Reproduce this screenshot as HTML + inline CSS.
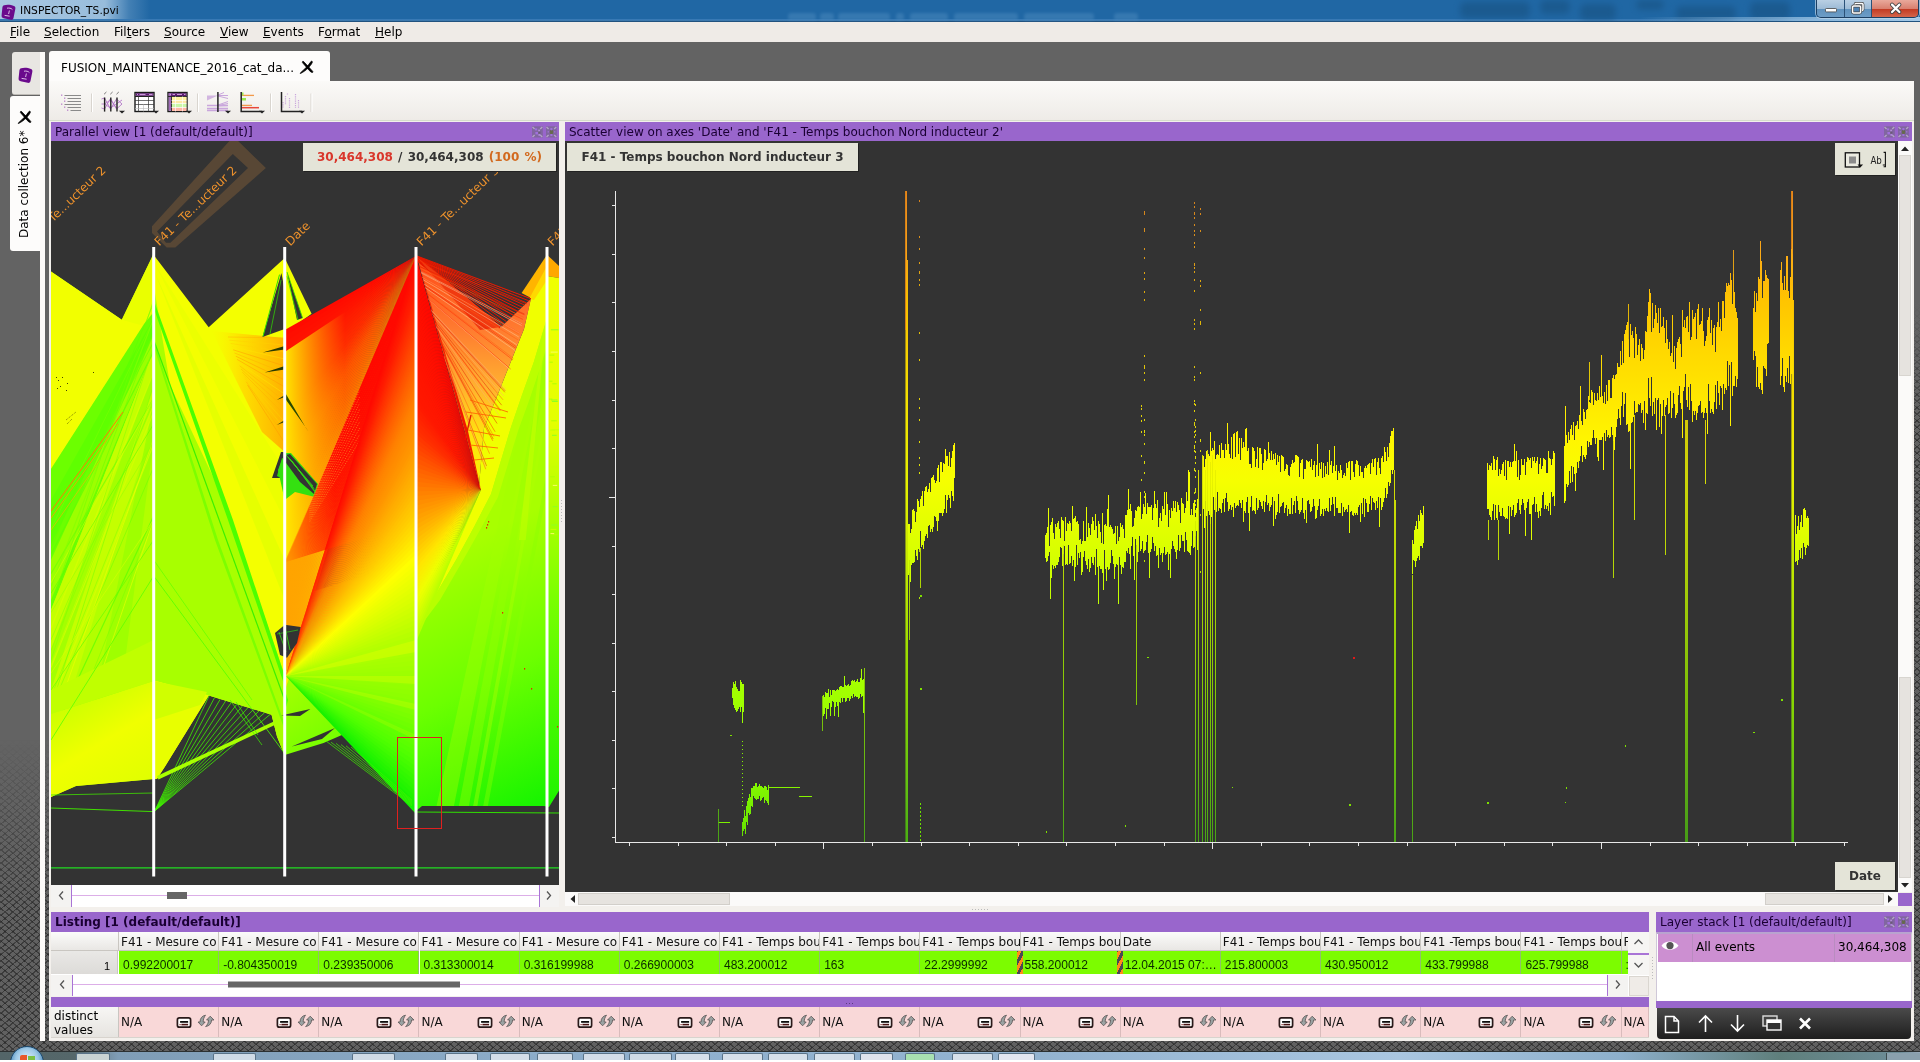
<!DOCTYPE html>
<html><head><meta charset="utf-8"><title>INSPECTOR_TS.pvi</title>
<style>

*{box-sizing:border-box;margin:0;padding:0}
html,body{width:1920px;height:1062px;overflow:hidden}
body{will-change:transform;background:#636363;font-family:"DejaVu Sans","Liberation Sans",sans-serif;font-size:12px;color:#000;position:relative}
.abs{position:absolute}
svg{position:absolute;overflow:visible}
#titlebar{left:0;top:0;width:1920px;height:22px;background:#2067a4}
#titleglow{left:0;top:0;width:150px;height:21px;background:linear-gradient(90deg,rgba(205,225,242,.8) 0,rgba(185,212,235,.78) 70%,rgba(120,165,205,.4) 86%,rgba(32,103,164,0) 100%)}
#titletext{left:20px;top:4px;font-size:10.67px;line-height:14px;color:#000;white-space:pre}
#titleline{left:0;top:18.5px;width:1920px;height:3.5px;background:linear-gradient(#2a6dab 0,#4a8ac2 40%,#1b4c78 75%,#2d5f8d 100%)}
#menubar{left:0;top:22px;width:1920px;height:20px;background:#efebe7}
.mi{position:absolute;top:3px;font-size:12px;line-height:14px;white-space:pre}
.mi u{text-decoration:underline;text-underline-offset:1px}
#win{left:49px;top:81px;width:1865px;height:960px;background:#f3f0ec}
#maintab{left:49px;top:51px;width:281px;height:31px;background:#fdfcfb;border-radius:3px 3px 0 0}
#toolbar{left:49px;top:81px;width:1865px;height:40px;background:linear-gradient(#fbfaf8,#eeebe7);border-bottom:1px solid #d5dccb}
.phead{position:absolute;height:19px;background:#9966cc;color:#1a0033;font-size:12px;line-height:20px;padding-left:4px;white-space:pre;overflow:hidden}
.dark{position:absolute;background:#333}
.lbl{position:absolute;background:#e4e4d8;font-weight:bold;font-size:12px;color:#333;white-space:pre;text-align:center;box-shadow:1px 1px 0 #222}
.hatch{position:absolute;background:
 repeating-linear-gradient(40deg,rgba(30,30,30,.55) 0,rgba(30,30,30,.55) 1px,transparent 1.2px,transparent 5px),
 repeating-linear-gradient(-40deg,rgba(30,30,30,.55) 0,rgba(30,30,30,.55) 1px,transparent 1.2px,transparent 5px),#616161}
.hc{position:absolute;top:932px;height:19px;width:100px;background:linear-gradient(#fbfbfa,#e9e7e4);border-right:1px solid #c9c6c1;border-bottom:1px solid #c9c6c1;font-size:12px;line-height:20px;padding-left:2px;white-space:pre;overflow:hidden;color:#111}
.dc{position:absolute;top:951px;height:23px;width:100px;background:#7cfc00;border-right:1px solid #8fbf6a;font-family:"Liberation Sans",sans-serif;font-size:12px;line-height:29px;padding-left:4px;white-space:pre;overflow:hidden;color:#0a2a00}
.nc{position:absolute;top:1007px;height:30px;width:100px;background:#f9d8d8;border-right:1px solid #d9bcbc;font-size:12px;line-height:31px;padding-left:2px;white-space:pre;overflow:hidden;color:#111}

</style></head>
<body>
<div class="hatch" style="left:0;top:1041px;width:1920px;height:11px"></div>
<div class="hatch" style="left:1914px;top:300px;width:6px;height:752px;-webkit-mask-image:linear-gradient(180deg,transparent 0,#000 120px);mask-image:linear-gradient(180deg,transparent 0,#000 120px)"></div>
<div class="hatch" style="left:0;top:740px;width:49px;height:312px;-webkit-mask-image:linear-gradient(180deg,transparent 0,#000 55%);mask-image:linear-gradient(180deg,transparent 0,#000 55%)"></div>
<div id="titlebar" class="abs"></div><div id="titleglow" class="abs"></div><div id="titleline" class="abs"></div>
<svg style="left:0px;top:4px" width="17" height="17" viewBox="0 0 15 17"><path d="M3.2 1.2 C6 0.2 10 0.6 13 2 C14.4 2.8 14.6 3.6 14.3 5 L12.6 13.6 C12.3 15.4 11.4 16.2 9.6 15.8 L2.6 14.2 C1 13.8 0.4 12.8 0.6 11.2 L1.4 3.4 C1.5 2.2 2.1 1.6 3.2 1.2 Z" fill="#6a0a8c"/><path d="M6 4.2 C8 3.8 10.4 4.2 11.4 5.6 M8.4 6.5 L7.6 10 M3.6 11.4 L8.6 12.2" stroke="#e8d0f0" stroke-width="0.9" fill="none"/></svg>
<div id="titletext" class="abs">INSPECTOR_TS.pvi</div>
<div class="abs" style="left:788px;top:11px;width:350px;height:9px;overflow:hidden;filter:blur(1.4px);opacity:.5"><div class="abs" style="left:0px;top:2px;width:28px;height:8px;background:#4c8abd;border-radius:3px"></div><div class="abs" style="left:32px;top:2px;width:14px;height:8px;background:#4c8abd;border-radius:3px"></div><div class="abs" style="left:50px;top:2px;width:52px;height:8px;background:#4c8abd;border-radius:3px"></div><div class="abs" style="left:108px;top:2px;width:8px;height:8px;background:#4c8abd;border-radius:3px"></div><div class="abs" style="left:122px;top:2px;width:38px;height:8px;background:#4c8abd;border-radius:3px"></div><div class="abs" style="left:166px;top:2px;width:64px;height:8px;background:#4c8abd;border-radius:3px"></div><div class="abs" style="left:236px;top:2px;width:70px;height:8px;background:#4c8abd;border-radius:3px"></div><div class="abs" style="left:326px;top:2px;width:24px;height:8px;background:#4c8abd;border-radius:3px"></div></div>
<div class="abs" style="left:1440px;top:0;width:380px;height:20px;overflow:hidden;filter:blur(3px);opacity:.55"><div class="abs" style="left:20px;top:2px;width:70px;height:16px;background:#17507f;border-radius:6px"></div><div class="abs" style="left:100px;top:0px;width:30px;height:14px;background:#17507f;border-radius:6px"></div><div class="abs" style="left:140px;top:4px;width:36px;height:16px;background:#17507f;border-radius:6px"></div><div class="abs" style="left:196px;top:0px;width:28px;height:10px;background:#17507f;border-radius:6px"></div><div class="abs" style="left:236px;top:6px;width:60px;height:14px;background:#17507f;border-radius:6px"></div><div class="abs" style="left:310px;top:2px;width:40px;height:18px;background:#17507f;border-radius:6px"></div></div>
<div class="abs" style="left:1640px;top:17px;width:280px;height:3.5px;background:linear-gradient(90deg,rgba(160,200,232,0),rgba(160,200,232,.75) 60%,rgba(175,210,238,.9))"></div>
<div class="abs" style="left:1816px;top:0;width:103px;height:18px;border-radius:0 0 5px 5px;border:1px solid #1c3f63;border-top:0;box-shadow:0 0 0 1px rgba(190,215,235,.7);overflow:hidden"><div class="abs" style="left:0;top:0;width:28px;height:18px;background:linear-gradient(#b9cfe3 0,#9dbbd6 48%,#5f91bd 50%,#6f9fc8 100%);border-right:1px solid #2b5177"></div><div class="abs" style="left:28px;top:0;width:27px;height:18px;background:linear-gradient(#b9cfe3 0,#9dbbd6 48%,#5f91bd 50%,#6f9fc8 100%);border-right:1px solid #2b5177"></div><div class="abs" style="left:55px;top:0;width:48px;height:18px;background:linear-gradient(#e9a99b 0,#d9806f 48%,#c23a22 50%,#d66a50 100%)"></div></div>
<svg style="left:1816px;top:0" width="103" height="18" viewBox="0 0 103 18"><rect x="9.5" y="8.5" width="11" height="3.4" rx="0.8" fill="#fff" stroke="#444" stroke-width=".8"/><rect x="39" y="3.4" width="8" height="7" rx="1" fill="none" stroke="#444" stroke-width="2.8"/><rect x="39" y="3.4" width="8" height="7" rx="1" fill="none" stroke="#fff" stroke-width="1.5"/><rect x="36.6" y="6" width="8" height="7" rx="1" fill="#4f83b4" stroke="#444" stroke-width="2.8"/><rect x="36.6" y="6" width="8" height="7" rx="1" fill="none" stroke="#fff" stroke-width="1.5"/><path d="M76 4.6 L83.4 12 M83.4 4.6 L76 12" stroke="#444" stroke-width="4" stroke-linecap="round"/><path d="M76 4.6 L83.4 12 M83.4 4.6 L76 12" stroke="#fff" stroke-width="2.2" stroke-linecap="round"/></svg>
<div id="menubar" class="abs">
<span class="mi" style="left:10px"><u>F</u>ile</span>
<span class="mi" style="left:44px"><u>S</u>election</span>
<span class="mi" style="left:114px">Fil<u>t</u>ers</span>
<span class="mi" style="left:164px"><u>S</u>ource</span>
<span class="mi" style="left:220px"><u>V</u>iew</span>
<span class="mi" style="left:263px"><u>E</u>vents</span>
<span class="mi" style="left:318px">F<u>o</u>rmat</span>
<span class="mi" style="left:375px"><u>H</u>elp</span>
</div>
<div class="abs" style="left:39.5px;top:51.5px;width:5px;height:989.5px;background:#fcfaf8"></div>
<div class="abs" style="left:11.5px;top:51.5px;width:28.5px;height:43.5px;background:#e8e6e2;border-radius:3px 0 0 3px;border-bottom:1px solid #bdbab5"></div>
<svg style="left:18px;top:67px" width="15" height="17" viewBox="0 0 15 17"><path d="M3.2 1.2 C6 0.2 10 0.6 13 2 C14.4 2.8 14.6 3.6 14.3 5 L12.6 13.6 C12.3 15.4 11.4 16.2 9.6 15.8 L2.6 14.2 C1 13.8 0.4 12.8 0.6 11.2 L1.4 3.4 C1.5 2.2 2.1 1.6 3.2 1.2 Z" fill="#6a0a8c"/><path d="M6 4.2 C8 3.8 10.4 4.2 11.4 5.6 M8.4 6.5 L7.6 10 M3.6 11.4 L8.6 12.2" stroke="#e8d0f0" stroke-width="0.9" fill="none"/></svg>
<div class="abs" style="left:9.5px;top:96px;width:30.5px;height:155px;background:#fdfcfb;border-radius:3px 0 0 3px"></div>
<svg style="left:18px;top:111px" width="14" height="13" viewBox="0 0 14 13"><path d="M2.6 0.4 C3.4 0.2 4 0.8 4.6 1.6 L12.6 10.2 C13.2 11 12.8 11.8 11.8 11.4 C10.8 11 10 10.2 9.2 9.4 L2.4 1.6 Z" fill="#000" stroke="#000" stroke-width=".7" stroke-linejoin="round"/><path d="M11.2 0.3 C12.2 -0.2 12.6 0.8 12.2 1.6 C10.4 5.2 6.4 9.6 0.6 12.4 C0.2 12.5 0 12.2 0.4 11.9 C4.4 8.6 8 4.6 11.2 0.3 Z" fill="#000" stroke="#000" stroke-width=".8" stroke-linejoin="round"/></svg>
<div class="abs" style="left:17px;top:238px;width:110px;height:15px;line-height:15px;font-size:12px;white-space:pre;transform-origin:0 0;transform:rotate(-90deg)">Data collection 6*</div>
<div id="maintab" class="abs"></div>
<div id="win" class="abs"></div>
<div id="toolbar" class="abs"></div>
<div class="abs" style="left:61px;top:61px;font-size:12px;line-height:15px;white-space:pre">FUSION_MAINTENANCE_2016_cat_da...</div>
<svg style="left:300px;top:60.5px" width="14" height="13" viewBox="0 0 14 13"><path d="M2.6 0.4 C3.4 0.2 4 0.8 4.6 1.6 L12.6 10.2 C13.2 11 12.8 11.8 11.8 11.4 C10.8 11 10 10.2 9.2 9.4 L2.4 1.6 Z" fill="#000" stroke="#000" stroke-width=".7" stroke-linejoin="round"/><path d="M11.2 0.3 C12.2 -0.2 12.6 0.8 12.2 1.6 C10.4 5.2 6.4 9.6 0.6 12.4 C0.2 12.5 0 12.2 0.4 11.9 C4.4 8.6 8 4.6 11.2 0.3 Z" fill="#000" stroke="#000" stroke-width=".8" stroke-linejoin="round"/></svg>
<svg style="left:49px;top:81px" width="300" height="40" viewBox="49 81 300 40"><path d="M91.5 93.5V112" stroke="#d9d5cf" stroke-width="1"/><path d="M92.5 93.5V112" stroke="#fff" stroke-width="1"/><path d="M197.5 93.5V112" stroke="#d9d5cf" stroke-width="1"/><path d="M198.5 93.5V112" stroke="#fff" stroke-width="1"/><path d="M270.5 93.5V112" stroke="#d9d5cf" stroke-width="1"/><path d="M271.5 93.5V112" stroke="#fff" stroke-width="1"/><path d="M311 93.5V112" stroke="#d9d5cf" stroke-width="1"/><path d="M312 93.5V112" stroke="#fff" stroke-width="1"/><path d="M64.5 95.5H81" stroke="#8a8a8a" stroke-width="1"/><rect x="61.1" y="94.6" width="1.2" height="1.1" fill="#a860c0"/><path d="M67.5 98.5H81" stroke="#8a8a8a" stroke-width="1"/><rect x="64.1" y="97.6" width="1.2" height="1.1" fill="#a860c0"/><path d="M67.5 101.5H81" stroke="#8a8a8a" stroke-width="1"/><rect x="64.1" y="100.6" width="1.2" height="1.1" fill="#a860c0"/><path d="M64.5 104.5H81" stroke="#8a8a8a" stroke-width="1"/><rect x="61.1" y="103.6" width="1.2" height="1.1" fill="#a860c0"/><path d="M67.5 107.5H81" stroke="#8a8a8a" stroke-width="1"/><rect x="64.1" y="106.6" width="1.2" height="1.1" fill="#a860c0"/><path d="M70.5 110.5H81" stroke="#8a8a8a" stroke-width="1"/><rect x="67.1" y="109.6" width="1.2" height="1.1" fill="#a860c0"/><path d="M101.5 99 L104.5 98 L110.5 109 L116.5 99 L122 104 L116.5 109 L110.5 98.5 L104.5 109 L101.5 108 M101.5 104 L104.5 104 L110.5 108 L116.5 104 L122 100 M104.5 104 L110.5 100 L116.5 108" stroke="#b070c8" stroke-width="1" fill="none" opacity=".85"/><path d="M104.6 97.5V111.6" stroke="#222" stroke-width="1.4"/><path d="M104.1 94.2 L106.39999999999999 92" stroke="#555" stroke-width="0.8"/><path d="M110.8 97.5V111.6" stroke="#222" stroke-width="1.4"/><path d="M110.3 94.2 L112.6 92" stroke="#555" stroke-width="0.8"/><path d="M117 97.5V111.6" stroke="#222" stroke-width="1.4"/><path d="M116.5 94.2 L118.8 92" stroke="#555" stroke-width="0.8"/><path d="M119 110.8h6l-3 2.6z" fill="#222"/><rect x="135" y="92.5" width="19" height="19" fill="#fff" stroke="#1a1a1a" stroke-width="1.4"/><rect x="135.7" y="93.2" width="17.6" height="2.6" fill="#5a1a6e"/><path d="M137 94.5h1 M139.5 94.5h6 M149 94.5h3.5" stroke="#c89ad8" stroke-width="1"/><path d="M135 96.5h19" stroke="#222" stroke-width="1" fill="none"/><path d="M135 100.5h19 M135 104.5h19 M138.5 96v15.5 M148.5 96v15.5" stroke="#333" stroke-width="0.7" fill="none"/><path d="M135 108.5h19 M143.5 104.5v7" stroke="#bbb" stroke-width="0.6" fill="none"/><path d="M153 110.8h6l-3 2.6z" fill="#222"/><rect x="168" y="92.5" width="19" height="19" fill="#fff" stroke="#1a1a1a" stroke-width="1.4"/><rect x="171.5" y="96.5" width="15" height="4" fill="#fff3a0"/><rect x="171.5" y="100.5" width="15" height="3" fill="#ffe9a8"/><rect x="171.5" y="103.5" width="15" height="4" fill="#c9f7a8"/><rect x="171.5" y="107.5" width="15" height="3.5" fill="#ffb9a8"/><rect x="168.7" y="93.2" width="17.6" height="2.8" fill="#5a1a6e"/><rect x="168.7" y="93.2" width="2.4" height="17.6" fill="#a06ab8"/><path d="M170 94.5h1 M172.5 94.5h2.5 M177 94.5h5 M184 94.5h1.5" stroke="#c89ad8" stroke-width="1"/><path d="M168 96.5h19 M171.5 96v15.5" stroke="#222" stroke-width="0.9" fill="none"/><path d="M175.5 96.5v15 M182.5 96.5v15 M171.5 100.5h15 M171.5 103.5h15 M171.5 107.5h15" stroke="#fff" stroke-width="0.8" opacity=".8" fill="none"/><path d="M186 110.8h6l-3 2.6z" fill="#222"/><path d="M207 95.5 L218 95.5 L207 100.5 Z" fill="#c9a6dc" opacity=".8"/><path d="M218 95 L224 92.5 M218 95.5 L228 95.5 M218 96 L228 98.5 M218 105 L228 101.5 M218 105.5 L228 103.5 M218 106 L228 105.5" stroke="#c9a6dc" stroke-width="1" fill="none"/><path d="M207 105.5H228 M207 108.5H228 M207 110.5H228" stroke="#c9a6dc" stroke-width="1.3" fill="none"/><path d="M217.9 92V112" stroke="#222" stroke-width="1.5"/><path d="M225 110.8h6l-3 2.6z" fill="#222"/><path d="M242 95.4H254" stroke="#f29a4a" stroke-width="1.3"/><path d="M242 98h4v2.5h-4z" fill="#9be84a"/><path d="M242 92.5h1.5v3h-1.5z" fill="#9be84a"/><path d="M242 105.4H252" stroke="#f29a4a" stroke-width="1.3"/><path d="M242 107.7H259" stroke="#e8463a" stroke-width="1.5"/><path d="M241.2 92V111.4H262" stroke="#222" stroke-width="1.5" fill="none"/><path d="M259 110.8h6l-3 2.6z" fill="#222"/><path d="M283 102v6 M285.5 96v9 M287.5 93.5v1 M289.5 98v10 M295.5 94v14 M298.5 100v8" stroke="#c9a6dc" stroke-width="1.2" stroke-dasharray="1.2 1" fill="none"/><path d="M281.5 92V111.4H302" stroke="#222" stroke-width="1.5" fill="none"/><path d="M299 110.8h6l-3 2.6z" fill="#222"/></svg>
<div class="phead" style="left:51px;top:122.3px;width:508px">Parallel view [1 (default/default)]</div>
<svg style="left:532px;top:126px" width="26" height="12" viewBox="0 0 26 12"><rect x="0" y="0.3" width="10.8" height="11.2" fill="#7f669c" opacity=".92"/><path d="M0.5 1 L2.6 3 M10.3 1 L8.2 3 M0.5 11 L2.6 9 M10.3 11 L8.2 9" stroke="#b4a6c6" stroke-width="1.3" fill="none"/><rect x="3" y="2.4" width="2.2" height="2" fill="#a070dc"/><rect x="3.4" y="6" width="2.6" height="2.4" fill="#a070dc"/><rect x="6.4" y="8" width="2" height="1.8" fill="#b088dc"/><rect x="6.2" y="3.6" width="1.8" height="1.8" fill="#b090d4"/><rect x="6.4" y="5.6" width="2" height="2" fill="#6a5a76"/><rect x="14" y="0.3" width="10.8" height="11.2" fill="#7f669c" opacity=".92"/><path d="M14.5 1 L16.6 3 M24.3 1 L22.2 3 M14.5 11 L16.6 9 M24.3 11 L22.2 9" stroke="#b4a6c6" stroke-width="1.3" fill="none"/><rect x="18.4" y="2" width="2" height="2" fill="#a070dc"/><rect x="18.4" y="8" width="2" height="2" fill="#a070dc"/><rect x="15.6" y="5" width="1.6" height="1.6" fill="#9a72c8"/><rect x="21.8" y="5" width="1.6" height="1.6" fill="#9a72c8"/><path d="M18 4.6 L21 7.4 M21 4.6 L18 7.4" stroke="#666a4c" stroke-width="1.6" fill="none"/></svg>
<div class="dark" style="left:51px;top:141px;width:508px;height:744px"></div>
<svg style="left:51px;top:141px;overflow:hidden" width="508" height="744" viewBox="51 141 508 744"><defs><linearGradient id="gB4" x1="211" y1="0" x2="285" y2="0" gradientUnits="userSpaceOnUse"><stop offset="0" stop-color="#fff000" stop-opacity="0"/><stop offset=".4" stop-color="#ffdc00" stop-opacity=".85"/><stop offset="1" stop-color="#ffb000"/></linearGradient><linearGradient id="gA4" x1="60" y1="700" x2="120" y2="800" gradientUnits="userSpaceOnUse"><stop offset="0" stop-color="#c8ff00"/><stop offset=".5" stop-color="#f0ff00"/><stop offset="1" stop-color="#e0ff00"/></linearGradient><linearGradient id="gD" x1="430" y1="560" x2="547" y2="800" gradientUnits="userSpaceOnUse"><stop offset="0" stop-color="#a8ff00"/><stop offset=".5" stop-color="#6cff00"/><stop offset="1" stop-color="#18f400"/></linearGradient><linearGradient id="gC" x1="300" y1="640" x2="416" y2="800" gradientUnits="userSpaceOnUse"><stop offset="0" stop-color="#b4ff00"/><stop offset=".5" stop-color="#78ff00"/><stop offset="1" stop-color="#18f400"/></linearGradient><linearGradient id="gO" x1="0" y1="258" x2="0" y2="490" gradientUnits="userSpaceOnUse"><stop offset="0" stop-color="#ff4a18"/><stop offset=".3" stop-color="#ff7a30"/><stop offset=".55" stop-color="#ffb030"/><stop offset=".75" stop-color="#ffe010"/><stop offset="1" stop-color="#f4f400"/></linearGradient><linearGradient id="gF1" x1="285" y1="0" x2="345" y2="0" gradientUnits="userSpaceOnUse"><stop offset="0" stop-color="#fff000" stop-opacity=".95"/><stop offset=".3" stop-color="#fff000" stop-opacity=".65"/><stop offset=".57" stop-color="#ffe800" stop-opacity=".4"/><stop offset="1" stop-color="#ffe000" stop-opacity="0"/></linearGradient><linearGradient id="gF2" x1="285" y1="0" x2="335" y2="0" gradientUnits="userSpaceOnUse"><stop offset="0" stop-color="#ffa000" stop-opacity=".95"/><stop offset=".5" stop-color="#ff8000" stop-opacity=".5"/><stop offset="1" stop-color="#ff6000" stop-opacity="0"/></linearGradient><linearGradient id="gR" x1="0" y1="276" x2="0" y2="800" gradientUnits="userSpaceOnUse"><stop offset="0" stop-color="#f0ff00"/><stop offset=".28" stop-color="#e4ff00"/><stop offset=".42" stop-color="#b8ff00"/><stop offset=".62" stop-color="#78ff00"/><stop offset="1" stop-color="#20f400"/></linearGradient></defs><polygon points="51.0,271.6 121.8,319.8 153.7,253.5 153.7,779.0 76.0,786.0 51.0,797.0" fill="#b2ff00" /><polygon points="51.0,271.6 121.8,319.8 146.0,322.0 51.0,469.0" fill="#f2ff00" /><polygon points="121.8,319.8 153.7,253.5 153.7,316.0 144.0,326.0" fill="#eaff00" /><polygon points="51.0,469.0 144.0,324.0 153.7,312.0 153.7,350.0 51.0,610.0" fill="#6cff00" /><polygon points="51.0,500.0 153.7,318.0 153.7,332.0 51.0,545.0" fill="#5cff00" opacity=".8"/><polygon points="51.0,560.0 153.7,335.0 153.7,350.0 51.0,600.0" fill="#9cff00" /><polygon points="51.0,610.0 153.7,350.0 153.7,420.0 51.0,760.0" fill="#c4ff00" /><polygon points="51.0,650.0 153.7,370.0 153.7,385.0 51.0,690.0" fill="#a4ff00" /><polygon points="95.0,700.0 153.7,400.0 153.7,440.0 120.0,700.0" fill="#9aff00" opacity=".8"/><clipPath id="cA"><polygon points="51,271.6 121.8,319.8 153.7,253.5 153.7,779 76,786 51,797"/></clipPath><g clip-path="url(#cA)"><path d="M51.0 650.3 L153.7 399.5" stroke="#86ff00" stroke-width="0.8" opacity=".7"/><path d="M51.0 667.5 L153.7 411.7" stroke="#d8ff00" stroke-width="1.2" opacity=".7"/><path d="M51.0 665.2 L153.7 404.7" stroke="#d8ff00" stroke-width="0.6" opacity=".7"/><path d="M51.0 573.8 L153.7 398.3" stroke="#70ff00" stroke-width="1.2" opacity=".7"/><path d="M51.0 696.8 L153.7 439.6" stroke="#86ff00" stroke-width="0.8" opacity=".7"/><path d="M51.0 704.7 L153.7 443.9" stroke="#d8ff00" stroke-width="1.2" opacity=".7"/><path d="M51.0 548.4 L153.7 303.3" stroke="#5cff00" stroke-width="0.6" opacity=".7"/><path d="M51.0 535.4 L153.7 341.8" stroke="#5cff00" stroke-width="0.8" opacity=".7"/><path d="M51.0 628.2 L153.7 371.8" stroke="#d8ff00" stroke-width="1.2" opacity=".7"/><path d="M51.0 554.3 L153.7 351.4" stroke="#5cff00" stroke-width="1.2" opacity=".7"/><path d="M51.0 586.6 L153.7 318.7" stroke="#86ff00" stroke-width="1.2" opacity=".7"/><path d="M51.0 820.3 L153.7 519.1" stroke="#f4ff00" stroke-width="0.8" opacity=".7"/><path d="M51.0 709.1 L153.7 466.8" stroke="#5cff00" stroke-width="0.6" opacity=".7"/><path d="M51.0 593.3 L153.7 423.9" stroke="#5cff00" stroke-width="0.8" opacity=".7"/><path d="M51.0 707.5 L153.7 385.0" stroke="#5cff00" stroke-width="0.6" opacity=".7"/><path d="M51.0 660.0 L153.7 346.1" stroke="#86ff00" stroke-width="0.8" opacity=".7"/><path d="M51.0 737.2 L153.7 515.7" stroke="#5cff00" stroke-width="1.2" opacity=".7"/><path d="M51.0 728.6 L153.7 438.5" stroke="#f4ff00" stroke-width="0.8" opacity=".7"/><path d="M51.0 529.0 L153.7 319.2" stroke="#86ff00" stroke-width="0.6" opacity=".7"/><path d="M51.0 606.9 L153.7 329.6" stroke="#5cff00" stroke-width="0.6" opacity=".7"/><path d="M51.0 639.9 L153.7 402.3" stroke="#70ff00" stroke-width="0.6" opacity=".7"/><path d="M51.0 582.8 L153.7 398.4" stroke="#d8ff00" stroke-width="0.8" opacity=".7"/><path d="M51.0 612.6 L153.7 441.6" stroke="#86ff00" stroke-width="0.6" opacity=".7"/><path d="M51.0 605.7 L153.7 300.1" stroke="#70ff00" stroke-width="0.8" opacity=".7"/><path d="M51.0 673.1 L153.7 519.5" stroke="#d8ff00" stroke-width="0.8" opacity=".7"/><path d="M51.0 777.4 L153.7 519.1" stroke="#70ff00" stroke-width="0.6" opacity=".7"/></g><path d="M51.0 511.0 L123.0 412.0" stroke="#ff7a00" stroke-width="1" /><path d="M51.0 518.0 L118.0 424.0" stroke="#ff9a00" stroke-width="0.8" /><path d="M51.0 530.0 L100.0 460.0" stroke="#ffb000" stroke-width="0.6" /><polygon points="153.7,681.0 153.7,779.0 76.0,786.0 51.0,797.0 51.0,714.0" fill="url(#gA4)" /><polygon points="153.7,640.0 153.7,681.0 51.0,714.0 51.0,690.0" fill="#c0ff00" /><path d="M51.0 740.0 L153.7 576.0" stroke="#66ff00" stroke-width="0.9" /><path d="M51.0 690.0 L153.7 540.0" stroke="#66ff00" stroke-width="0.7" /><path d="M51.0 795.0 L153.7 793.0" stroke="#40e000" stroke-width="0.8" /><path d="M51.0 808.0 L153.7 811.6" stroke="#40e000" stroke-width="1" /><rect x="56.0" y="377.0" width="1" height="1" fill="#444400"/><rect x="58.0" y="380.0" width="1" height="1" fill="#444400"/><rect x="62.0" y="377.0" width="1" height="1" fill="#444400"/><rect x="60.0" y="386.0" width="1" height="1" fill="#444400"/><rect x="66.0" y="390.0" width="1" height="1" fill="#444400"/><rect x="93.0" y="372.0" width="1" height="1" fill="#444400"/><rect x="57.0" y="388.0" width="1" height="1" fill="#444400"/><rect x="67.0" y="383.0" width="1" height="1" fill="#444400"/><path d="M66.0 420.0 L76.0 412.0" stroke="#555500" stroke-width="0.7" stroke-dasharray="1 1"/><path d="M67.0 424.0 L72.0 419.0" stroke="#555500" stroke-width="0.7" stroke-dasharray="1 1"/><polygon points="153.7,255.0 208.7,327.3 284.7,258.0 284.7,755.6 277.0,736.5 271.5,714.7 208.8,695.6 165.0,766.5 157.0,778.8 153.7,779.0" fill="#f4ff00" /><polygon points="153.7,285.0 170.0,385.0 222.0,496.0 245.0,560.0 284.7,675.0 284.7,755.6 277.0,736.5 271.5,714.7 208.8,695.6 153.7,680.6" fill="#a8ff00" /><polygon points="153.7,262.0 284.7,470.0 284.7,520.0" fill="#ecff00" /><polygon points="153.7,270.0 284.7,560.0 284.7,600.0" fill="#e6ff00" /><polygon points="153.7,300.0 153.7,308.0 228.0,520.0 284.7,686.0 284.7,676.0 233.0,520.0" fill="#4cff00" /><polygon points="153.7,340.0 153.7,346.0 215.0,540.0 284.7,730.0 284.7,724.0 218.0,540.0" fill="#7cff00" /><path d="M153.7 340.0 L284.7 700.0" stroke="#3cf000" stroke-width="1.2" /><path d="M153.7 576.0 L284.7 753.6" stroke="#50ff00" stroke-width="0.8" /><path d="M153.7 560.0 L252.0 700.0" stroke="#50ff00" stroke-width="0.6" /><polygon points="153.7,680.6 208.8,695.6 165.0,766.5 157.0,778.8 153.7,779.0" fill="#e8ff00" /><polygon points="153.7,681.0 207.0,692.0 200.0,705.0 153.7,720.0" fill="#d0ff00" /><polygon points="211.7,331.0 284.7,338.0 284.7,452.0 262.0,432.0 238.0,384.0" fill="url(#gB4)" /><path d="M228.0 337.0 L284.7 338.0" stroke="#ffb000" stroke-width="0.7" opacity=".7"/><path d="M229.3 340.2 L284.7 345.0" stroke="#ffd000" stroke-width="0.7" opacity=".7"/><path d="M230.6 343.4 L284.7 352.0" stroke="#ffd000" stroke-width="0.7" opacity=".7"/><path d="M231.9 346.6 L284.7 359.0" stroke="#ffe400" stroke-width="0.7" opacity=".7"/><path d="M233.2 349.8 L284.7 366.0" stroke="#ff9a00" stroke-width="0.7" opacity=".7"/><path d="M234.5 353.0 L284.7 373.0" stroke="#ffb000" stroke-width="0.7" opacity=".7"/><path d="M235.8 356.2 L284.7 380.0" stroke="#ff9a00" stroke-width="0.7" opacity=".7"/><path d="M237.1 359.4 L284.7 387.0" stroke="#ff9a00" stroke-width="0.7" opacity=".7"/><path d="M238.4 362.6 L284.7 394.0" stroke="#ffe400" stroke-width="0.7" opacity=".7"/><path d="M239.7 365.8 L284.7 401.0" stroke="#ffb000" stroke-width="0.7" opacity=".7"/><path d="M241.0 369.0 L284.7 408.0" stroke="#ffb000" stroke-width="0.7" opacity=".7"/><path d="M242.3 372.2 L284.7 415.0" stroke="#ffb000" stroke-width="0.7" opacity=".7"/><path d="M243.6 375.4 L284.7 422.0" stroke="#ffd000" stroke-width="0.7" opacity=".7"/><path d="M244.9 378.6 L284.7 429.0" stroke="#ffd000" stroke-width="0.7" opacity=".7"/><path d="M246.2 381.8 L284.7 436.0" stroke="#ffb000" stroke-width="0.7" opacity=".7"/><path d="M247.5 385.0 L284.7 443.0" stroke="#ff9a00" stroke-width="0.7" opacity=".7"/><polygon points="281.4,273.0 262.5,337.0 284.7,329.0 284.7,290.0" fill="#333" /><path d="M279.5 274.6 L263.0 336.4" stroke="#30e000" stroke-width="1" /><path d="M281.0 280.0 L270.0 334.0" stroke="#30e000" stroke-width="0.7" /><polygon points="262.7,352.5 284.7,346.0 284.7,349.5" fill="#2a3a00" /><polygon points="264.7,372.5 284.7,366.0 284.7,369.5" fill="#2a3a00" /><polygon points="276.7,400.0 284.7,395.0 284.7,397.0" fill="#2a3a00" /><polygon points="276.7,425.0 284.7,420.0 284.7,422.0" fill="#2a3a00" /><polygon points="272.0,478.0 281.0,452.0 284.7,452.0 284.7,478.0" fill="#333" /><polygon points="277.0,476.0 282.0,458.0 284.7,458.0 284.7,480.0" fill="#30e000" /><path d="M154.7 811.0 L209.0 696.0" stroke="#40f000" stroke-width="0.8" /><path d="M154.7 811.0 L214.5 697.7" stroke="#40f000" stroke-width="0.8" /><path d="M154.7 811.0 L220.1 699.4" stroke="#40f000" stroke-width="0.8" /><path d="M154.7 811.0 L225.6 701.0" stroke="#40f000" stroke-width="0.8" /><path d="M154.7 811.0 L231.2 702.7" stroke="#40f000" stroke-width="0.8" /><path d="M154.7 811.0 L236.7 704.4" stroke="#40f000" stroke-width="0.8" /><path d="M154.7 811.0 L242.3 706.1" stroke="#40f000" stroke-width="0.8" /><path d="M154.7 811.0 L247.8 707.8" stroke="#40f000" stroke-width="0.8" /><path d="M154.7 811.0 L253.4 709.5" stroke="#40f000" stroke-width="0.8" /><path d="M154.7 811.0 L258.9 711.1" stroke="#40f000" stroke-width="0.8" /><path d="M154.7 811.0 L264.5 712.8" stroke="#40f000" stroke-width="0.8" /><path d="M154.7 811.0 L270.0 714.5" stroke="#40f000" stroke-width="0.8" /><polygon points="157.0,776.0 277.0,720.0 278.0,723.5 158.5,779.5" fill="#a8ff00" /><path d="M230.0 700.0 L262.0 745.0" stroke="#40f000" stroke-width="0.7" /><path d="M236.0 702.0 L258.0 735.0" stroke="#40f000" stroke-width="0.7" /><polygon points="284.7,258.0 311.6,313.8 300.0,322.0 288.0,331.0 284.7,331.0" fill="#f2ff00" /><polygon points="287.0,272.0 302.6,318.0 297.0,320.0" fill="#333" /><path d="M287.0 272.0 L302.6 318.0" stroke="#30e000" stroke-width="0.8" /><path d="M287.0 276.0 L298.0 320.0" stroke="#30e000" stroke-width="0.8" /><polygon points="284.7,600.0 416.0,560.0 416.0,812.0 412.4,805.5 346.5,733.0 323.5,743.0 284.7,755.0" fill="url(#gC)" /><polygon points="416.0,256.0 284.7,330.0 284.7,338.0" fill="#ff0b00" /><polygon points="416.0,256.0 284.7,336.0 284.7,344.0" fill="#ff0e00" /><polygon points="416.0,256.0 284.7,342.0 284.7,350.0" fill="#ff1000" /><polygon points="416.0,256.0 284.7,348.0 284.7,356.0" fill="#ff1200" /><polygon points="416.0,256.0 284.7,354.0 284.7,362.0" fill="#ff1400" /><polygon points="416.0,256.0 284.7,360.0 284.7,368.0" fill="#ff1700" /><polygon points="416.0,256.0 284.7,366.0 284.7,374.0" fill="#ff1900" /><polygon points="416.0,256.0 284.7,372.0 284.7,380.0" fill="#ff1c00" /><polygon points="416.0,256.0 284.7,378.0 284.7,386.0" fill="#ff1e00" /><polygon points="416.0,256.0 284.7,384.0 284.7,392.0" fill="#ff2000" /><polygon points="416.0,256.0 284.7,390.0 284.7,398.0" fill="#ff2200" /><polygon points="416.0,256.0 284.7,396.0 284.7,404.0" fill="#ff2500" /><polygon points="416.0,256.0 284.7,402.0 284.7,410.0" fill="#ff2700" /><polygon points="416.0,256.0 284.7,408.0 284.7,416.0" fill="#ff2a00" /><polygon points="416.0,256.0 284.7,414.0 284.7,422.0" fill="#ff2c00" /><polygon points="416.0,256.0 284.7,420.0 284.7,428.0" fill="#ff2f00" /><polygon points="416.0,256.0 284.7,426.0 284.7,434.0" fill="#ff3400" /><polygon points="416.0,256.0 284.7,432.0 284.7,440.0" fill="#ff3800" /><polygon points="416.0,256.0 284.7,438.0 284.7,446.0" fill="#ff3d00" /><polygon points="416.0,256.0 284.7,444.0 284.7,452.0" fill="#ff4100" /><polygon points="416.0,256.0 284.7,450.0 284.7,458.0" fill="#ff4600" /><polygon points="416.0,256.0 284.7,456.0 284.7,464.0" fill="#ff4a00" /><polygon points="416.0,256.0 284.7,462.0 284.7,470.0" fill="#ff4f00" /><polygon points="416.0,256.0 284.7,468.0 284.7,476.0" fill="#ff5300" /><polygon points="416.0,256.0 284.7,474.0 284.7,482.0" fill="#ff5700" /><polygon points="416.0,256.0 284.7,480.0 284.7,488.0" fill="#ff5900" /><polygon points="416.0,256.0 284.7,486.0 284.7,494.0" fill="#ff5b00" /><polygon points="416.0,256.0 284.7,492.0 284.7,500.0" fill="#ff5e00" /><polygon points="416.0,256.0 284.7,498.0 284.7,506.0" fill="#ff6000" /><polygon points="416.0,256.0 284.7,504.0 284.7,512.0" fill="#ff6200" /><polygon points="416.0,256.0 284.7,510.0 284.7,518.0" fill="#ff6500" /><polygon points="416.0,256.0 284.7,516.0 284.7,524.0" fill="#ff6700" /><polygon points="416.0,256.0 284.7,522.0 284.7,530.0" fill="#ff6900" /><polygon points="416.0,256.0 284.7,528.0 284.7,536.0" fill="#ff6c00" /><polygon points="416.0,256.0 284.7,534.0 284.7,542.0" fill="#ff6e00" /><polygon points="416.0,256.0 284.7,540.0 284.7,548.0" fill="#ff7200" /><polygon points="416.0,256.0 284.7,546.0 284.7,554.0" fill="#ff7600" /><polygon points="416.0,256.0 284.7,552.0 284.7,560.0" fill="#ff7900" /><polygon points="416.0,256.0 284.7,558.0 284.7,566.0" fill="#ff7d00" /><polygon points="416.0,256.0 284.7,564.0 284.7,572.0" fill="#ff8100" /><polygon points="416.0,256.0 284.7,570.0 284.7,578.0" fill="#ff8500" /><polygon points="416.0,256.0 284.7,576.0 284.7,584.0" fill="#ff8900" /><polygon points="416.0,256.0 284.7,582.0 284.7,590.0" fill="#ff8c00" /><polygon points="416.0,256.0 284.7,588.0 284.7,596.0" fill="#ff9000" /><polygon points="416.0,256.0 284.7,594.0 284.7,602.0" fill="#ff9400" /><polygon points="416.0,256.0 284.7,600.0 284.7,608.0" fill="#ff9800" /><polygon points="416.0,256.0 284.7,606.0 284.7,614.0" fill="#ff9b00" /><polygon points="416.0,256.0 284.7,612.0 284.7,620.0" fill="#ff9e00" /><polygon points="416.0,256.0 284.7,618.0 284.7,626.0" fill="#ffa200" /><polygon points="416.0,256.0 284.7,624.0 284.7,632.0" fill="#ffa500" /><polygon points="416.0,256.0 284.7,630.0 284.7,638.0" fill="#ffa800" /><polygon points="416.0,256.0 284.7,636.0 284.7,644.0" fill="#ffac00" /><polygon points="416.0,256.0 284.7,642.0 284.7,650.0" fill="#ffaf00" /><polygon points="416.0,256.0 284.7,648.0 284.7,656.0" fill="#ffb200" /><polygon points="416.0,256.0 284.7,654.0 284.7,662.0" fill="#ffb600" /><polygon points="416.0,256.0 284.7,660.0 284.7,668.0" fill="#ffb900" /><polygon points="416.0,256.0 284.7,666.0 284.7,674.0" fill="#ffbc00" /><polygon points="416.0,256.0 284.7,672.0 284.7,680.0" fill="#ffc000" /><polygon points="416.0,256.0 284.7,678.0 284.7,686.0" fill="#ffc300" /><polygon points="416.0,256.0 284.7,684.0 284.7,692.0" fill="#ffc600" /><polygon points="284.7,352.0 345.0,312.0 345.0,530.0 284.7,690.0" fill="url(#gF1)" /><polygon points="278.0,470.0 284.7,453.0 291.0,453.0 318.0,484.0 315.0,497.0 295.0,492.0 284.7,500.0" fill="#34e010" /><polygon points="281.0,456.0 290.0,454.0 317.0,484.0 314.0,494.0 300.0,482.0" fill="#333" /><path d="M286.0 455.0 L313.0 486.0" stroke="#34e010" stroke-width="0.8" /><path d="M288.0 457.0 L314.0 488.5" stroke="#34e010" stroke-width="0.8" /><path d="M290.0 459.0 L315.0 491.0" stroke="#34e010" stroke-width="0.8" /><path d="M292.0 461.0 L316.0 493.5" stroke="#34e010" stroke-width="0.8" /><polygon points="284.7,392.0 306.0,428.0 309.0,432.0 284.7,398.0" fill="#2a4a00" /><polygon points="285.7,562.0 416.0,256.0 416.0,264.6" fill="#ff0800" /><polygon points="285.7,562.0 416.0,262.6 416.0,271.2" fill="#ff0900" /><polygon points="285.7,562.0 416.0,269.2 416.0,277.8" fill="#ff0900" /><polygon points="285.7,562.0 416.0,275.8 416.0,284.4" fill="#ff0a00" /><polygon points="285.7,562.0 416.0,282.4 416.0,291.0" fill="#ff0a00" /><polygon points="285.7,562.0 416.0,289.0 416.0,297.6" fill="#ff0b00" /><polygon points="285.7,562.0 416.0,295.6 416.0,304.2" fill="#ff0b00" /><polygon points="285.7,562.0 416.0,302.2 416.0,310.8" fill="#ff0c00" /><polygon points="285.7,562.0 416.0,308.8 416.0,317.4" fill="#ff0d00" /><polygon points="285.7,562.0 416.0,315.4 416.0,324.0" fill="#ff0d00" /><polygon points="285.7,562.0 416.0,322.0 416.0,330.6" fill="#ff0e00" /><polygon points="285.7,562.0 416.0,328.6 416.0,337.2" fill="#ff0e00" /><polygon points="285.7,562.0 416.0,335.2 416.0,343.8" fill="#ff1000" /><polygon points="285.7,562.0 416.0,341.8 416.0,350.4" fill="#ff1100" /><polygon points="285.7,562.0 416.0,348.4 416.0,357.0" fill="#ff1200" /><polygon points="285.7,562.0 416.0,355.0 416.0,363.6" fill="#ff1300" /><polygon points="285.7,562.0 416.0,361.6 416.0,370.2" fill="#ff1400" /><polygon points="285.7,562.0 416.0,368.2 416.0,376.8" fill="#ff1500" /><polygon points="285.7,562.0 416.0,374.8 416.0,383.4" fill="#ff1700" /><polygon points="285.7,562.0 416.0,381.4 416.0,390.0" fill="#ff1800" /><polygon points="285.7,562.0 416.0,388.0 416.0,396.6" fill="#ff1900" /><polygon points="285.7,562.0 416.0,394.6 416.0,403.2" fill="#ff1a00" /><polygon points="285.7,562.0 416.0,401.2 416.0,409.8" fill="#ff1b00" /><polygon points="285.7,562.0 416.0,407.8 416.0,416.4" fill="#ff1c00" /><polygon points="285.7,562.0 416.0,414.4 416.0,423.0" fill="#ff1e00" /><polygon points="285.7,562.0 416.0,421.0 416.0,429.6" fill="#ff1f00" /><polygon points="285.7,562.0 416.0,427.6 416.0,436.2" fill="#ff2100" /><polygon points="285.7,562.0 416.0,434.2 416.0,442.8" fill="#ff2300" /><polygon points="285.7,562.0 416.0,440.8 416.0,449.4" fill="#ff2500" /><polygon points="285.7,562.0 416.0,447.4 416.0,456.0" fill="#ff2700" /><polygon points="285.7,562.0 416.0,454.0 416.0,462.6" fill="#ff2900" /><polygon points="285.7,562.0 416.0,460.6 416.0,469.2" fill="#ff2b00" /><polygon points="285.7,562.0 416.0,467.2 416.0,475.8" fill="#ff2d00" /><polygon points="285.7,562.0 416.0,473.8 416.0,482.4" fill="#ff2f00" /><polygon points="285.7,562.0 416.0,480.4 416.0,489.0" fill="#ff3100" /><polygon points="285.7,562.0 416.0,487.0 416.0,495.6" fill="#ff3300" /><polygon points="285.7,562.0 416.0,493.6 416.0,502.2" fill="#ff3500" /><polygon points="285.7,562.0 416.0,500.2 416.0,508.8" fill="#ff3700" /><polygon points="285.7,562.0 416.0,506.8 416.0,515.4" fill="#ff3900" /><polygon points="285.7,562.0 416.0,513.4 416.0,522.0" fill="#ff3b00" /><path d="M309.7 504.7 L359.7 390.2" stroke="#ffd640" stroke-width="0.6" stroke-dasharray="1 1.6" opacity=".8"/><path d="M309.7 506.8 L359.7 396.5" stroke="#ffd640" stroke-width="0.6" stroke-dasharray="1 1.6" opacity=".8"/><path d="M309.7 508.9 L359.7 402.8" stroke="#ffd640" stroke-width="0.6" stroke-dasharray="1 1.6" opacity=".8"/><path d="M309.7 511.0 L359.7 409.1" stroke="#ffd640" stroke-width="0.6" stroke-dasharray="1 1.6" opacity=".8"/><path d="M309.7 513.1 L359.7 415.4" stroke="#ffd640" stroke-width="0.6" stroke-dasharray="1 1.6" opacity=".8"/><path d="M309.7 515.2 L359.7 421.7" stroke="#ffd640" stroke-width="0.6" stroke-dasharray="1 1.6" opacity=".8"/><path d="M309.7 517.3 L359.7 428.0" stroke="#ffd640" stroke-width="0.6" stroke-dasharray="1 1.6" opacity=".8"/><path d="M309.7 519.4 L359.7 434.3" stroke="#ffd640" stroke-width="0.6" stroke-dasharray="1 1.6" opacity=".8"/><path d="M309.7 521.5 L359.7 440.6" stroke="#ffd640" stroke-width="0.6" stroke-dasharray="1 1.6" opacity=".8"/><polygon points="284.7,562.0 335.0,445.0 335.0,560.0 284.7,676.0" fill="url(#gF2)" /><polygon points="285.7,676.0 416.0,256.0 416.0,263.1" fill="#ff0a00" /><polygon points="285.7,676.0 416.0,261.1 416.0,268.1" fill="#ff0d00" /><polygon points="285.7,676.0 416.0,266.1 416.0,273.2" fill="#ff1000" /><polygon points="285.7,676.0 416.0,271.2 416.0,278.2" fill="#ff1300" /><polygon points="285.7,676.0 416.0,276.2 416.0,283.3" fill="#ff1700" /><polygon points="285.7,676.0 416.0,281.3 416.0,288.3" fill="#ff1a00" /><polygon points="285.7,676.0 416.0,286.3 416.0,293.4" fill="#ff1d00" /><polygon points="285.7,676.0 416.0,291.4 416.0,298.4" fill="#ff2100" /><polygon points="285.7,676.0 416.0,296.4 416.0,303.5" fill="#ff2600" /><polygon points="285.7,676.0 416.0,301.5 416.0,308.5" fill="#ff2a00" /><polygon points="285.7,676.0 416.0,306.5 416.0,313.6" fill="#ff2f00" /><polygon points="285.7,676.0 416.0,311.6 416.0,318.7" fill="#ff3300" /><polygon points="285.7,676.0 416.0,316.7 416.0,323.7" fill="#ff3800" /><polygon points="285.7,676.0 416.0,321.7 416.0,328.8" fill="#ff3c00" /><polygon points="285.7,676.0 416.0,326.8 416.0,333.8" fill="#ff4100" /><polygon points="285.7,676.0 416.0,331.8 416.0,338.9" fill="#ff4600" /><polygon points="285.7,676.0 416.0,336.9 416.0,343.9" fill="#ff4a00" /><polygon points="285.7,676.0 416.0,341.9 416.0,349.0" fill="#ff4f00" /><polygon points="285.7,676.0 416.0,347.0 416.0,354.0" fill="#ff5400" /><polygon points="285.7,676.0 416.0,352.0 416.0,359.1" fill="#ff5800" /><polygon points="285.7,676.0 416.0,357.1 416.0,364.1" fill="#ff5d00" /><polygon points="285.7,676.0 416.0,362.1 416.0,369.2" fill="#ff6200" /><polygon points="285.7,676.0 416.0,367.2 416.0,374.3" fill="#ff6600" /><polygon points="285.7,676.0 416.0,372.3 416.0,379.3" fill="#ff6b00" /><polygon points="285.7,676.0 416.0,377.3 416.0,384.4" fill="#ff6f00" /><polygon points="285.7,676.0 416.0,382.4 416.0,389.4" fill="#ff7400" /><polygon points="285.7,676.0 416.0,387.4 416.0,394.5" fill="#ff7800" /><polygon points="285.7,676.0 416.0,392.5 416.0,399.5" fill="#ff7d00" /><polygon points="285.7,676.0 416.0,397.5 416.0,404.6" fill="#ff8100" /><polygon points="285.7,676.0 416.0,402.6 416.0,409.6" fill="#ff8400" /><polygon points="285.7,676.0 416.0,407.6 416.0,414.7" fill="#ff8700" /><polygon points="285.7,676.0 416.0,412.7 416.0,419.7" fill="#ff8900" /><polygon points="285.7,676.0 416.0,417.7 416.0,424.8" fill="#ff8c00" /><polygon points="285.7,676.0 416.0,422.8 416.0,429.9" fill="#ff8e00" /><polygon points="285.7,676.0 416.0,427.9 416.0,434.9" fill="#ff9100" /><polygon points="285.7,676.0 416.0,432.9 416.0,440.0" fill="#ff9400" /><polygon points="285.7,676.0 416.0,438.0 416.0,445.0" fill="#ff9600" /><polygon points="285.7,676.0 416.0,443.0 416.0,450.1" fill="#ff9a00" /><polygon points="285.7,676.0 416.0,448.1 416.0,455.1" fill="#ff9e00" /><polygon points="285.7,676.0 416.0,453.1 416.0,460.2" fill="#ffa100" /><polygon points="285.7,676.0 416.0,458.2 416.0,465.2" fill="#ffa500" /><polygon points="285.7,676.0 416.0,463.2 416.0,470.3" fill="#ffa900" /><polygon points="285.7,676.0 416.0,468.3 416.0,475.3" fill="#ffad00" /><polygon points="285.7,676.0 416.0,473.3 416.0,480.4" fill="#ffb000" /><polygon points="285.7,676.0 416.0,478.4 416.0,485.5" fill="#ffb400" /><polygon points="285.7,676.0 416.0,483.5 416.0,490.5" fill="#ffb800" /><polygon points="285.7,676.0 416.0,488.5 416.0,495.6" fill="#ffbc00" /><polygon points="285.7,676.0 416.0,493.6 416.0,500.6" fill="#ffc100" /><polygon points="285.7,676.0 416.0,498.6 416.0,505.7" fill="#ffc500" /><polygon points="285.7,676.0 416.0,503.7 416.0,510.7" fill="#ffc900" /><polygon points="285.7,676.0 416.0,508.7 416.0,515.8" fill="#ffcd00" /><polygon points="285.7,676.0 416.0,513.8 416.0,520.8" fill="#ffd200" /><polygon points="285.7,676.0 416.0,518.8 416.0,525.9" fill="#ffd700" /><polygon points="285.7,676.0 416.0,523.9 416.0,530.9" fill="#ffdc00" /><polygon points="285.7,676.0 416.0,528.9 416.0,536.0" fill="#ffe100" /><polygon points="285.7,676.0 416.0,534.0 416.0,541.1" fill="#ffe700" /><polygon points="285.7,676.0 416.0,539.1 416.0,546.1" fill="#ffec00" /><polygon points="285.7,676.0 416.0,544.1 416.0,551.2" fill="#fff200" /><polygon points="285.7,676.0 416.0,549.2 416.0,556.2" fill="#fff800" /><polygon points="285.7,676.0 416.0,554.2 416.0,561.3" fill="#ffff00" /><polygon points="285.7,676.0 416.0,559.3 416.0,566.3" fill="#fbff00" /><polygon points="285.7,676.0 416.0,564.3 416.0,571.4" fill="#f6ff00" /><polygon points="285.7,676.0 416.0,569.4 416.0,576.4" fill="#f1ff00" /><polygon points="285.7,676.0 416.0,574.4 416.0,581.5" fill="#ecff00" /><polygon points="285.7,676.0 416.0,579.5 416.0,586.5" fill="#e8ff00" /><polygon points="285.7,676.0 416.0,584.5 416.0,591.6" fill="#e3ff00" /><polygon points="285.7,676.0 416.0,589.6 416.0,596.7" fill="#deff00" /><polygon points="285.7,676.0 416.0,594.7 416.0,601.7" fill="#daff00" /><polygon points="285.7,676.0 416.0,599.7 416.0,606.8" fill="#d5ff00" /><polygon points="285.7,676.0 416.0,604.8 416.0,611.8" fill="#d0ff00" /><polygon points="285.7,676.0 416.0,609.8 416.0,616.9" fill="#cbff00" /><polygon points="285.7,676.0 416.0,614.9 416.0,621.9" fill="#c6ff00" /><polygon points="285.7,676.0 416.0,619.9 416.0,627.0" fill="#c1ff00" /><polygon points="285.7,676.0 416.0,625.0 416.0,632.0" fill="#bcff00" /><polygon points="285.7,676.0 416.0,630.0 416.0,637.1" fill="#b7ff00" /><polygon points="285.7,676.0 416.0,635.1 416.0,642.1" fill="#b3ff00" /><polygon points="285.7,676.0 416.0,640.1 416.0,647.2" fill="#b0ff00" /><polygon points="285.7,676.0 416.0,645.2 416.0,652.3" fill="#adff00" /><polygon points="285.7,676.0 416.0,650.3 416.0,657.3" fill="#aaff00" /><polygon points="285.7,676.0 416.0,655.3 416.0,662.4" fill="#a6ff00" /><polygon points="285.7,676.0 416.0,660.4 416.0,667.4" fill="#a3ff00" /><polygon points="285.7,676.0 416.0,665.4 416.0,672.5" fill="#a0ff00" /><polygon points="285.7,676.0 416.0,670.5 416.0,677.5" fill="#9dff00" /><polygon points="285.7,676.0 416.0,675.5 416.0,682.6" fill="#9aff00" /><polygon points="285.7,676.0 416.0,680.6 416.0,687.6" fill="#97ff00" /><polygon points="285.7,676.0 416.0,685.6 416.0,692.7" fill="#93ff00" /><polygon points="285.7,676.0 416.0,690.7 416.0,697.7" fill="#90ff00" /><polygon points="285.7,676.0 416.0,695.7 416.0,702.8" fill="#8dff00" /><polygon points="285.7,676.0 416.0,700.8 416.0,707.9" fill="#89ff00" /><polygon points="285.7,676.0 416.0,705.9 416.0,712.9" fill="#84ff00" /><polygon points="285.7,676.0 416.0,710.9 416.0,718.0" fill="#7fff00" /><polygon points="285.7,676.0 416.0,716.0 416.0,723.0" fill="#7aff00" /><polygon points="285.7,676.0 416.0,721.0 416.0,728.1" fill="#74ff00" /><polygon points="285.7,676.0 416.0,726.1 416.0,733.1" fill="#6fff00" /><polygon points="285.7,676.0 416.0,731.1 416.0,738.2" fill="#6aff00" /><polygon points="285.7,676.0 416.0,736.2 416.0,743.2" fill="#65ff00" /><polygon points="285.7,676.0 416.0,741.2 416.0,748.3" fill="#60ff00" /><polygon points="285.7,676.0 416.0,746.3 416.0,753.3" fill="#5bff00" /><polygon points="285.7,676.0 416.0,751.3 416.0,758.4" fill="#56ff00" /><polygon points="285.7,676.0 416.0,756.4 416.0,763.5" fill="#51ff00" /><polygon points="285.7,676.0 416.0,761.5 416.0,768.5" fill="#4bfe00" /><polygon points="285.7,676.0 416.0,766.5 416.0,773.6" fill="#45fc00" /><polygon points="285.7,676.0 416.0,771.6 416.0,778.6" fill="#3ffb00" /><polygon points="285.7,676.0 416.0,776.6 416.0,783.7" fill="#38f900" /><polygon points="285.7,676.0 416.0,781.7 416.0,788.7" fill="#32f800" /><polygon points="285.7,676.0 416.0,786.7 416.0,793.8" fill="#2cf700" /><polygon points="285.7,676.0 416.0,791.8 416.0,798.8" fill="#26f500" /><polygon points="285.7,676.0 416.0,796.8 416.0,803.9" fill="#20f400" /><polygon points="285.7,676.0 416.0,801.9 416.0,808.9" fill="#19f200" /><polygon points="285.7,676.0 416.0,806.9 416.0,814.0" fill="#13f100" /><polygon points="285.7,676.0 416.0,640.0 416.0,652.0" fill="#d8ff00" opacity=".55"/><polygon points="285.7,676.0 416.0,676.0 416.0,684.0" fill="#c4ff00" opacity=".55"/><polygon points="285.7,676.0 416.0,704.0 416.0,710.0" fill="#b0ff00" opacity=".55"/><polygon points="285.7,676.0 416.0,735.0 416.0,740.0" fill="#90ff00" opacity=".55"/><polygon points="275.0,633.0 284.8,624.7 300.7,627.0 297.0,643.0 287.0,657.8 280.0,655.0" fill="#333" /><path d="M279.0 632.0 L286.0 652.0" stroke="#34e010" stroke-width="0.8" /><path d="M284.8 626.0 L290.0 650.0" stroke="#34e010" stroke-width="0.8" /><path d="M277.0 634.0 L298.0 630.0" stroke="#34e010" stroke-width="0.6" /><polygon points="281.0,715.4 310.4,709.0 300.0,716.0" fill="#333" /><polygon points="291.8,746.5 335.0,727.9 322.0,739.0" fill="#333" /><polygon points="288.0,700.0 284.7,690.0 284.7,712.0" fill="#48ff00" /><path d="M326.0 741.0 L412.0 806.0" stroke="#40f000" stroke-width="0.7" /><path d="M331.0 742.2 L412.0 804.8" stroke="#40f000" stroke-width="0.7" /><path d="M336.0 743.4 L412.0 803.6" stroke="#40f000" stroke-width="0.7" /><path d="M341.0 744.6 L412.0 802.4" stroke="#40f000" stroke-width="0.7" /><path d="M346.0 745.8 L412.0 801.2" stroke="#40f000" stroke-width="0.7" /><path d="M351.0 747.0 L412.0 800.0" stroke="#40f000" stroke-width="0.7" /><polygon points="416.0,590.0 449.0,560.0 481.0,490.0 515.0,372.0 538.0,300.0 547.0,270.0 547.0,790.7 549.0,807.0 544.0,806.0 422.0,806.0 416.0,811.0" fill="url(#gD)" /><clipPath id="cD"><polygon points="416.0,590.0 449.0,560.0 481.0,490.0 515.0,372.0 538.0,300.0 547.0,270.0 547.0,790.7 549.0,807.0 544.0,806.0 422.0,806.0 416.0,811.0"/></clipPath><g clip-path="url(#cD)" opacity=".4"><polygon points="547.0,300.0 547.0,330.0 416.0,1000.0 416.0,900.0" fill="#a4ff00" /><polygon points="547.0,345.0 547.0,372.0 416.0,1100.0 416.0,1030.0" fill="#96ff00" /><polygon points="547.0,400.0 547.0,415.0 416.0,1150.0 416.0,1120.0" fill="#b0ff00" /><polygon points="547.0,470.0 547.0,490.0 416.0,1190.0 416.0,1160.0" fill="#8cff00" /><polygon points="547.0,300.0 547.0,312.0 525.7,540.0 519.0,540.0" fill="#d0ff00" /></g><polygon points="547.0,258.0 531.0,298.0 524.0,329.0 510.7,362.0 497.5,395.0 484.0,428.0 479.0,486.0 481.0,490.0 464.5,527.0 446.0,560.0 431.0,590.0 416.0,606.0 416.0,618.0 436.0,594.0 456.0,560.0 474.0,527.0 491.0,494.0 500.8,461.0 510.7,428.0 522.0,395.0 533.8,362.0 543.7,329.0 547.0,318.0" fill="#f0ff00" /><polygon points="547.0,318.0 543.7,329.0 533.8,362.0 522.0,395.0 510.7,428.0 500.8,461.0 491.0,494.0 474.0,527.0 456.0,560.0 436.0,594.0 416.0,618.0 416.0,632.0 440.0,600.0 462.0,562.0 480.0,530.0 498.0,497.0 508.0,464.0 518.0,431.0 530.0,398.0 541.0,365.0 547.0,346.0" fill="#c0ff00" opacity=".8"/><polygon points="547.0,254.7 521.6,293.0 531.0,298.0 547.0,272.0" fill="#ffb400" /><polygon points="547.0,266.0 529.0,299.0 534.0,300.0 547.0,280.0" fill="#ffd800" /><polygon points="417.0,257.0 531.0,298.7 524.0,329.0 510.7,362.0 497.5,395.0 484.0,428.0 479.0,486.0 481.0,490.0" fill="url(#gO)" /><polygon points="420.0,258.0 531.0,298.7 501.0,327.0" fill="#333" /><path d="M417.0 256.0 L531.0 298.7" stroke="#e81800" stroke-width="1" /><path d="M417.0 256.4 L528.8 300.8" stroke="#e81800" stroke-width="1" /><path d="M417.0 256.7 L526.6 302.9" stroke="#e81800" stroke-width="1" /><path d="M417.0 257.1 L524.4 305.0" stroke="#e81800" stroke-width="1" /><path d="M417.0 257.4 L522.1 307.1" stroke="#e81800" stroke-width="1" /><path d="M417.0 257.8 L519.9 309.2" stroke="#e81800" stroke-width="1" /><path d="M417.0 258.1 L517.7 311.3" stroke="#e81800" stroke-width="1" /><path d="M417.0 258.5 L515.5 313.4" stroke="#e81800" stroke-width="1" /><path d="M417.0 258.9 L513.3 315.4" stroke="#e81800" stroke-width="1" /><path d="M417.0 259.2 L511.1 317.5" stroke="#e81800" stroke-width="1" /><path d="M417.0 259.6 L508.9 319.6" stroke="#e81800" stroke-width="1" /><path d="M417.0 259.9 L506.6 321.7" stroke="#e81800" stroke-width="1" /><path d="M417.0 260.3 L504.4 323.8" stroke="#e81800" stroke-width="1" /><path d="M417.0 260.6 L502.2 325.9" stroke="#e81800" stroke-width="1" /><path d="M417.0 261.0 L500.0 328.0" stroke="#e81800" stroke-width="1" /><polygon points="417.0,257.0 470.0,300.0 501.0,327.0 480.0,330.0" fill="#f03a10" /><polygon points="417.0,257.0 468.0,431.0 481.0,490.0" fill="#f01800" /><path d="M428.2 298.9 L510.5 369.9" stroke="#ffd0a0" stroke-width="0.6" opacity=".8"/><path d="M420.8 272.0 L522.0 323.9" stroke="#e02000" stroke-width="0.6" opacity=".8"/><path d="M431.5 311.2 L505.3 390.9" stroke="#e02000" stroke-width="0.6" opacity=".8"/><path d="M421.1 272.9 L521.6 325.5" stroke="#ffd0a0" stroke-width="0.6" opacity=".8"/><path d="M422.5 278.1 L519.4 334.4" stroke="#ff5a10" stroke-width="0.6" opacity=".8"/><path d="M426.3 292.2 L513.4 358.4" stroke="#ff5a10" stroke-width="0.6" opacity=".8"/><path d="M441.5 348.0 L489.6 453.7" stroke="#ff5a10" stroke-width="0.6" opacity=".8"/><path d="M438.8 337.8 L493.9 436.4" stroke="#ff5a10" stroke-width="0.6" opacity=".8"/><path d="M439.2 339.3 L493.2 439.0" stroke="#e02000" stroke-width="0.6" opacity=".8"/><path d="M422.9 279.6 L518.8 337.0" stroke="#ffd0a0" stroke-width="0.6" opacity=".8"/><path d="M443.5 355.0 L486.5 465.9" stroke="#e02000" stroke-width="0.6" opacity=".8"/><path d="M419.4 266.6 L524.3 314.8" stroke="#ff2800" stroke-width="0.6" opacity=".8"/><path d="M420.1 269.4 L523.1 319.5" stroke="#ff2800" stroke-width="0.6" opacity=".8"/><path d="M432.4 314.4 L503.9 396.3" stroke="#ffb070" stroke-width="0.6" opacity=".8"/><path d="M424.2 284.2 L516.8 344.8" stroke="#ffd0a0" stroke-width="0.6" opacity=".8"/><path d="M424.7 286.3 L515.9 348.3" stroke="#e02000" stroke-width="0.6" opacity=".8"/><path d="M431.7 312.0 L504.9 392.3" stroke="#e02000" stroke-width="0.6" opacity=".8"/><path d="M422.3 277.3 L519.8 333.0" stroke="#ff2800" stroke-width="0.6" opacity=".8"/><path d="M420.8 271.9 L522.1 323.8" stroke="#ffd0a0" stroke-width="0.6" opacity=".8"/><path d="M433.8 319.5 L501.7 405.2" stroke="#e02000" stroke-width="0.6" opacity=".8"/><path d="M435.4 325.6 L499.1 415.5" stroke="#ffb070" stroke-width="0.6" opacity=".8"/><path d="M423.4 281.4 L518.0 339.9" stroke="#ff5a10" stroke-width="0.6" opacity=".8"/><path d="M439.5 340.4 L492.8 440.8" stroke="#ff2800" stroke-width="0.6" opacity=".8"/><path d="M425.1 287.6 L515.3 350.6" stroke="#ffd0a0" stroke-width="0.6" opacity=".8"/><path d="M424.5 285.4 L516.3 346.8" stroke="#ff2800" stroke-width="0.6" opacity=".8"/><path d="M422.3 277.4 L519.7 333.1" stroke="#ffb070" stroke-width="0.6" opacity=".8"/><path d="M432.9 316.4 L503.0 399.8" stroke="#ff5a10" stroke-width="0.6" opacity=".8"/><path d="M419.8 268.1 L523.7 317.3" stroke="#ff5a10" stroke-width="0.6" opacity=".8"/><path d="M443.7 356.0 L486.1 467.5" stroke="#ffb070" stroke-width="0.6" opacity=".8"/><path d="M436.7 330.3 L497.1 423.5" stroke="#e02000" stroke-width="0.6" opacity=".8"/><path d="M434.5 322.3 L500.5 409.9" stroke="#ff5a10" stroke-width="0.6" opacity=".8"/><path d="M434.7 322.9 L500.3 410.9" stroke="#ff2800" stroke-width="0.6" opacity=".8"/><path d="M431.2 310.2 L505.7 389.3" stroke="#ffb070" stroke-width="0.6" opacity=".8"/><path d="M438.0 335.1 L495.1 431.8" stroke="#ff2800" stroke-width="0.6" opacity=".8"/><path d="M417.6 260.3 L527.0 304.0" stroke="#ff2800" stroke-width="0.6" opacity=".8"/><path d="M431.5 311.0 L505.3 390.7" stroke="#ffb070" stroke-width="0.6" opacity=".8"/><path d="M426.6 293.1 L513.0 360.0" stroke="#ff2800" stroke-width="0.6" opacity=".8"/><path d="M419.3 266.3 L524.5 314.1" stroke="#e02000" stroke-width="0.6" opacity=".8"/><path d="M428.0 298.5 L510.7 369.1" stroke="#ff2800" stroke-width="0.6" opacity=".8"/><path d="M444.0 357.0 L485.7 469.2" stroke="#ff5a10" stroke-width="0.6" opacity=".8"/><path d="M470.0 400.0 L508.0 412.0" stroke="#ff5a00" stroke-width="0.8" /><path d="M466.0 412.0 L506.0 418.0" stroke="#ff5a00" stroke-width="0.8" /><path d="M468.0 430.0 L500.0 436.0" stroke="#ff5a00" stroke-width="0.8" /><path d="M470.0 445.0 L498.0 448.0" stroke="#ff5a00" stroke-width="0.8" /><path d="M474.0 460.0 L494.0 458.0" stroke="#ff5a00" stroke-width="0.8" /><path d="M465.0 440.0 L471.0 415.0" stroke="#e02000" stroke-width="1.4" /><polygon points="480.8,490.0 416.0,256.0 416.0,262.8" fill="#ff0800" /><polygon points="480.8,490.0 416.0,260.8 416.0,267.6" fill="#ff0900" /><polygon points="480.8,490.0 416.0,265.6 416.0,272.4" fill="#ff0900" /><polygon points="480.8,490.0 416.0,270.4 416.0,277.2" fill="#ff0a00" /><polygon points="480.8,490.0 416.0,275.2 416.0,282.0" fill="#ff0a00" /><polygon points="480.8,490.0 416.0,280.0 416.0,286.8" fill="#ff0b00" /><polygon points="480.8,490.0 416.0,284.8 416.0,291.6" fill="#ff0b00" /><polygon points="480.8,490.0 416.0,289.6 416.0,296.4" fill="#ff0c00" /><polygon points="480.8,490.0 416.0,294.4 416.0,301.2" fill="#ff0d00" /><polygon points="480.8,490.0 416.0,299.2 416.0,306.0" fill="#ff0d00" /><polygon points="480.8,490.0 416.0,304.0 416.0,310.8" fill="#ff0e00" /><polygon points="480.8,490.0 416.0,308.8 416.0,315.6" fill="#ff0e00" /><polygon points="480.8,490.0 416.0,313.6 416.0,320.4" fill="#ff0f00" /><polygon points="480.8,490.0 416.0,318.4 416.0,325.2" fill="#ff0f00" /><polygon points="480.8,490.0 416.0,323.2 416.0,330.0" fill="#ff1000" /><polygon points="480.8,490.0 416.0,328.0 416.0,334.8" fill="#ff1000" /><polygon points="480.8,490.0 416.0,332.8 416.0,339.6" fill="#ff1100" /><polygon points="480.8,490.0 416.0,337.6 416.0,344.4" fill="#ff1100" /><polygon points="480.8,490.0 416.0,342.4 416.0,349.2" fill="#ff1200" /><polygon points="480.8,490.0 416.0,347.2 416.0,354.0" fill="#ff1200" /><polygon points="480.8,490.0 416.0,352.0 416.0,358.8" fill="#ff1300" /><polygon points="480.8,490.0 416.0,356.8 416.0,363.6" fill="#ff1300" /><polygon points="480.8,490.0 416.0,361.6 416.0,368.4" fill="#ff1400" /><polygon points="480.8,490.0 416.0,366.4 416.0,373.2" fill="#ff1500" /><polygon points="480.8,490.0 416.0,371.2 416.0,378.0" fill="#ff1500" /><polygon points="480.8,490.0 416.0,376.0 416.0,382.8" fill="#ff1600" /><polygon points="480.8,490.0 416.0,380.8 416.0,387.6" fill="#ff1600" /><polygon points="480.8,490.0 416.0,385.6 416.0,392.4" fill="#ff1700" /><polygon points="480.8,490.0 416.0,390.4 416.0,397.2" fill="#ff1700" /><polygon points="480.8,490.0 416.0,395.2 416.0,402.0" fill="#ff1800" /><polygon points="480.8,490.0 416.0,400.0 416.0,406.8" fill="#ff1a00" /><polygon points="480.8,490.0 416.0,404.8 416.0,411.6" fill="#ff1e00" /><polygon points="480.8,490.0 416.0,409.6 416.0,416.4" fill="#ff2100" /><polygon points="480.8,490.0 416.0,414.4 416.0,421.2" fill="#ff2500" /><polygon points="480.8,490.0 416.0,419.2 416.0,426.0" fill="#ff2900" /><polygon points="480.8,490.0 416.0,424.0 416.0,430.8" fill="#ff2c00" /><polygon points="480.8,490.0 416.0,428.8 416.0,435.6" fill="#ff3000" /><polygon points="480.8,490.0 416.0,433.6 416.0,440.4" fill="#ff3700" /><polygon points="480.8,490.0 416.0,438.4 416.0,445.2" fill="#ff3d00" /><polygon points="480.8,490.0 416.0,443.2 416.0,450.0" fill="#ff4300" /><polygon points="480.8,490.0 416.0,448.0 416.0,454.8" fill="#ff4900" /><polygon points="480.8,490.0 416.0,452.8 416.0,459.6" fill="#ff5000" /><polygon points="480.8,490.0 416.0,457.6 416.0,464.4" fill="#ff5600" /><polygon points="480.8,490.0 416.0,462.4 416.0,469.2" fill="#ff5c00" /><polygon points="480.8,490.0 416.0,467.2 416.0,474.0" fill="#ff6300" /><polygon points="480.8,490.0 416.0,472.0 416.0,478.8" fill="#ff6900" /><polygon points="480.8,490.0 416.0,476.8 416.0,483.6" fill="#ff6f00" /><polygon points="480.8,490.0 416.0,481.6 416.0,488.4" fill="#ff7500" /><polygon points="480.8,490.0 416.0,486.4 416.0,493.2" fill="#ff7c00" /><polygon points="480.8,490.0 416.0,491.2 416.0,498.0" fill="#ff8200" /><polygon points="480.8,490.0 416.0,496.0 416.0,502.8" fill="#ff8800" /><polygon points="480.8,490.0 416.0,500.8 416.0,507.6" fill="#ff8e00" /><polygon points="480.8,490.0 416.0,505.6 416.0,512.4" fill="#ff9400" /><polygon points="480.8,490.0 416.0,510.4 416.0,517.2" fill="#ff9a00" /><polygon points="480.8,490.0 416.0,515.2 416.0,522.0" fill="#ffa000" /><polygon points="480.8,490.0 416.0,520.0 416.0,526.8" fill="#ffa600" /><polygon points="480.8,490.0 416.0,524.8 416.0,531.6" fill="#ffac00" /><polygon points="480.8,490.0 416.0,529.6 416.0,536.4" fill="#ffb300" /><polygon points="480.8,490.0 416.0,534.4 416.0,541.2" fill="#ffb900" /><polygon points="480.8,490.0 416.0,539.2 416.0,546.0" fill="#ffc000" /><polygon points="480.8,490.0 416.0,544.0 416.0,550.8" fill="#ffc600" /><polygon points="480.8,490.0 416.0,548.8 416.0,555.6" fill="#ffcd00" /><polygon points="480.8,490.0 416.0,553.6 416.0,560.4" fill="#ffd300" /><polygon points="480.8,490.0 416.0,558.4 416.0,565.2" fill="#ffda00" /><polygon points="480.8,490.0 416.0,563.2 416.0,570.0" fill="#ffe000" /><polygon points="480.8,490.0 416.0,568.0 416.0,574.8" fill="#ffe600" /><polygon points="480.8,490.0 416.0,572.8 416.0,579.6" fill="#fcea00" /><polygon points="480.8,490.0 416.0,577.6 416.0,584.4" fill="#faee00" /><polygon points="480.8,490.0 416.0,582.4 416.0,589.2" fill="#f8f200" /><polygon points="480.8,490.0 416.0,587.2 416.0,594.0" fill="#f5f600" /><polygon points="480.8,490.0 416.0,592.0 416.0,598.8" fill="#f3fa00" /><polygon points="480.8,490.0 416.0,596.8 416.0,603.6" fill="#f0fe00" /><polygon points="480.8,490.0 416.0,601.6 416.0,608.4" fill="#eaff00" /><polygon points="480.8,490.0 416.0,606.4 416.0,613.2" fill="#e3ff00" /><polygon points="480.8,490.0 416.0,611.2 416.0,618.0" fill="#dcff00" /><polygon points="480.8,490.0 416.0,616.0 416.0,622.8" fill="#d4ff00" /><polygon points="480.8,490.0 416.0,620.8 416.0,627.6" fill="#cdff00" /><polygon points="480.8,490.0 416.0,625.6 416.0,632.4" fill="#c6ff00" /><polygon points="480.8,490.0 416.0,630.4 416.0,637.2" fill="#bfff00" /><polygon points="480.8,490.0 416.0,635.2 416.0,642.0" fill="#b8ff00" /><polygon points="547.0,254.7 559.0,266.0 559.0,278.0 547.0,276.0" fill="#ffa800" /><polygon points="547.0,276.0 559.0,278.0 559.0,781.0 560.0,789.0 549.0,807.0 547.0,807.0" fill="url(#gR)" /><rect x="552.7" y="506.2" width="4.8" height="1" fill="#90ff20"/><rect x="552.5" y="534.2" width="5.1" height="1" fill="#b0ff00"/><rect x="551.3" y="524.5" width="6.1" height="1" fill="#90ff20"/><rect x="549.0" y="398.6" width="3.4" height="1" fill="#b0ff00"/><rect x="553.0" y="466.2" width="7.4" height="1" fill="#c8ff00"/><rect x="551.9" y="401.0" width="5.9" height="1" fill="#90ff20"/><rect x="551.2" y="420.3" width="5.6" height="1" fill="#b0ff00"/><rect x="549.4" y="380.7" width="3.1" height="1" fill="#b0ff00"/><rect x="551.5" y="429.3" width="7.6" height="1" fill="#c8ff00"/><rect x="550.5" y="533.1" width="3.7" height="1" fill="#f6ff60"/><rect x="552.0" y="434.8" width="4.7" height="1" fill="#90ff20"/><rect x="550.0" y="429.6" width="5.0" height="1" fill="#c8ff00"/><rect x="550.7" y="351.6" width="7.0" height="1" fill="#f6ff60"/><rect x="550.5" y="528.9" width="5.9" height="1" fill="#c8ff00"/><rect x="549.5" y="354.6" width="4.8" height="1" fill="#b0ff00"/><rect x="552.8" y="484.9" width="4.4" height="1" fill="#f6ff60"/><rect x="550.9" y="329.3" width="7.6" height="1" fill="#90ff20"/><rect x="551.1" y="399.5" width="6.4" height="1" fill="#90ff20"/><rect x="552.3" y="383.3" width="4.4" height="1" fill="#b0ff00"/><rect x="550.1" y="476.3" width="4.8" height="1" fill="#b0ff00"/><rect x="550.6" y="466.7" width="3.9" height="1" fill="#c8ff00"/><rect x="549.6" y="361.7" width="3.2" height="1" fill="#b0ff00"/><rect x="486.0" y="527.0" width="1.2" height="1.6" fill="#e03000"/><rect x="487.0" y="524.0" width="1.2" height="1.6" fill="#e03000"/><rect x="488.0" y="521.0" width="1.2" height="1.6" fill="#e03000"/><rect x="502.0" y="612.0" width="1.2" height="1.6" fill="#e03000"/><rect x="524.0" y="668.0" width="1.2" height="1.6" fill="#e03000"/><rect x="531.0" y="688.0" width="1.2" height="1.6" fill="#e03000"/><rect x="557.0" y="726.0" width="1.2" height="1.6" fill="#e03000"/><path d="M416.0 812.0 L559.0 813.0" stroke="#30e000" stroke-width="1" /><path d="M51.0 867.8 L559.0 867.8" stroke="#22dd22" stroke-width="1.2" /><rect x="152.2" y="247" width="3" height="629.5" fill="#fff"/><rect x="283.2" y="247" width="3" height="629.5" fill="#fff"/><rect x="414.5" y="247" width="3" height="629.5" fill="#fff"/><rect x="545.5" y="247" width="3" height="629.5" fill="#fff"/><rect x="397.5" y="737.5" width="44" height="91" fill="none" stroke="#e02020" stroke-width="1"/><path fill-rule="evenodd" fill="#c8843a" fill-opacity=".25" d="M152 226.2L233.5 136.5L265.9 168L175.3 247.6L166.7 247.6L152 233Z M157 231.5L232.8 154L248 168L170.4 242.7L166 242.7Z"/><g font-family="DejaVu Sans, sans-serif" font-size="12" fill="#ee922c"><text transform="translate(28.3,246.5) rotate(-44)">F41 - Te...ucteur 2</text><text transform="translate(159.3,246.5) rotate(-44)">F41 - Te...ucteur 2</text><text transform="translate(290.3,246.5) rotate(-44)">Date</text><text transform="translate(421.6,246.5) rotate(-44)">F41 - Te...ucteur 3</text><text transform="translate(552.6,246.5) rotate(-44)">F41 - Te...ucteur 3</text></g></svg>
<div class="lbl" style="left:303px;top:143px;width:253px;height:28px;line-height:28px;word-spacing:1px"><span style="color:#d9362b">30,464,308</span> / 30,464,308 <span style="color:#d2691e">(100 %)</span></div>
<div class="abs" style="left:51px;top:885px;width:508px;height:22px;background:#fff"></div>
<div class="abs" style="left:51px;top:885px;width:20px;height:22px;background:#f4f3f1"></div><div class="abs" style="left:539px;top:885px;width:20px;height:22px;background:#f4f3f1"></div>
<svg style="left:51px;top:885px" width="508" height="22" viewBox="0 0 508 22"><path d="M20.5 0V22 M488.5 0V22" stroke="#a974d6" stroke-width="1"/><path d="M21 10.5H488" stroke="#dcaee8" stroke-width="1"/><rect x="116" y="7" width="20" height="7" fill="#666"/><path d="M12 6.5 L8.5 10.5 L12 14.5 M496 6.5 L499.5 10.5 L496 14.5" stroke="#555" stroke-width="1.3" fill="none"/></svg>
<div class="phead" style="left:565px;top:122.3px;width:1347px">Scatter view on axes 'Date' and 'F41 - Temps bouchon Nord inducteur 2'</div>
<svg style="left:1884px;top:126px" width="26" height="12" viewBox="0 0 26 12"><rect x="0" y="0.3" width="10.8" height="11.2" fill="#7f669c" opacity=".92"/><path d="M0.5 1 L2.6 3 M10.3 1 L8.2 3 M0.5 11 L2.6 9 M10.3 11 L8.2 9" stroke="#b4a6c6" stroke-width="1.3" fill="none"/><rect x="3" y="2.4" width="2.2" height="2" fill="#a070dc"/><rect x="3.4" y="6" width="2.6" height="2.4" fill="#a070dc"/><rect x="6.4" y="8" width="2" height="1.8" fill="#b088dc"/><rect x="6.2" y="3.6" width="1.8" height="1.8" fill="#b090d4"/><rect x="6.4" y="5.6" width="2" height="2" fill="#6a5a76"/><rect x="14" y="0.3" width="10.8" height="11.2" fill="#7f669c" opacity=".92"/><path d="M14.5 1 L16.6 3 M24.3 1 L22.2 3 M14.5 11 L16.6 9 M24.3 11 L22.2 9" stroke="#b4a6c6" stroke-width="1.3" fill="none"/><rect x="18.4" y="2" width="2" height="2" fill="#a070dc"/><rect x="18.4" y="8" width="2" height="2" fill="#a070dc"/><rect x="15.6" y="5" width="1.6" height="1.6" fill="#9a72c8"/><rect x="21.8" y="5" width="1.6" height="1.6" fill="#9a72c8"/><path d="M18 4.6 L21 7.4 M21 4.6 L18 7.4" stroke="#666a4c" stroke-width="1.6" fill="none"/></svg>
<div class="dark" style="left:565px;top:141px;width:1333px;height:751px"></div>
<svg style="left:565px;top:141px;overflow:hidden" width="1332" height="751" viewBox="565 141 1332 751" shape-rendering="crispEdges"><defs><linearGradient id="gy" x1="0" y1="191" x2="0" y2="842" gradientUnits="userSpaceOnUse"><stop offset="0" stop-color="#ee8a18"/><stop offset="0.09" stop-color="#fba818"/><stop offset="0.167" stop-color="#ffc400"/><stop offset="0.244" stop-color="#ffd800"/><stop offset="0.32" stop-color="#ffe800"/><stop offset="0.385" stop-color="#fff600"/><stop offset="0.445" stop-color="#f6ff00"/><stop offset="0.54" stop-color="#dcff00"/><stop offset="0.64" stop-color="#beff00"/><stop offset="0.77" stop-color="#a2ff00"/><stop offset="0.9" stop-color="#88fa00"/><stop offset="1" stop-color="#62e000"/></linearGradient><linearGradient id="gl" x1="0" y1="191" x2="0" y2="842" gradientUnits="userSpaceOnUse"><stop offset="0" stop-color="#e8861a"/><stop offset="0.09" stop-color="#f4a418"/><stop offset="0.167" stop-color="#f8c000"/><stop offset="0.32" stop-color="#f4e000"/><stop offset="0.445" stop-color="#e6f000"/><stop offset="0.54" stop-color="#cdea00"/><stop offset="0.64" stop-color="#b0e400"/><stop offset="0.77" stop-color="#8cd800"/><stop offset="0.9" stop-color="#66c410"/><stop offset="1" stop-color="#4aae12"/></linearGradient></defs><path d="M615.5 191V842.5H1847.5M612.0 205.5H615M612.0 254.5H615M612.0 302.5H615M612.0 351.5H615M612.0 400.5H615M612.0 448.5H615M609.0 497.5H615M612.0 546.5H615M612.0 594.5H615M612.0 643.5H615M612.0 691.5H615M612.0 740.5H615M612.0 788.5H615M612.0 837.5H615M629.5 843V846.0M678.5 843V846.0M726.5 843V846.0M775.5 843V846.0M823.5 843V849.0M872.5 843V846.0M921.5 843V846.0M969.5 843V846.0M1018.5 843V846.0M1066.5 843V846.0M1115.5 843V846.0M1164.5 843V846.0M1212.5 843V849.0M1261.5 843V846.0M1309.5 843V846.0M1358.5 843V846.0M1407.5 843V846.0M1455.5 843V846.0M1504.5 843V846.0M1552.5 843V846.0M1601.5 843V849.0M1650.5 843V846.0M1698.5 843V846.0M1747.5 843V846.0M1795.5 843V846.0M1844.5 843V846.0" stroke="#e8e8e8" stroke-width="1" fill="none"/><path d="M718 822.5H730" stroke="#7ef000" stroke-width="1"/><path d="M742.5 741V809" stroke="#84f000" stroke-width="1" stroke-dasharray="1 3"/><path d="M768 787.5H800M799 796.5H812" stroke="#86f400" stroke-width="1.4"/><path d="M906.5 191V842M907.5 260V842" stroke="url(#gl)" stroke-width="1"/><path d="M905.5 330V842" stroke="url(#gl)" stroke-width="1" opacity=".55"/><path d="M905.5 191V330" stroke="#d88018" stroke-width="1"/><path d="M920.5 803V842" stroke="#6ce000" stroke-width="1" stroke-dasharray="2 2"/><path d="M1685.5 420V842M1686.5 420V842M1687.5 420V842" stroke="url(#gl)" stroke-width="1" opacity=".85"/><path d="M1792.5 191V842M1793.5 300V842" stroke="url(#gl)" stroke-width="1"/><path d="M1791.5 330V842" stroke="url(#gl)" stroke-width="1" opacity=".6"/><path d="M1791.5 191V330" stroke="#d88018" stroke-width="1"/><path d="M732.5 688V698M733.5 682V705M734.5 684V708M735.5 681V710M736.5 687V712M737.5 689V711M738.5 691V709M739.5 691V707M740.5 680V712M741.5 682V707M742.5 684V723M743.5 684V712M742.5 822V836M743.5 818V831M744.5 810V829M745.5 816V834M746.5 806V822M747.5 801V825M748.5 798V813M749.5 794V815M750.5 797V814M751.5 788V806M752.5 788V807M753.5 786V796M754.5 786V798M755.5 783V799M756.5 783V800M757.5 787V799M758.5 786V799M759.5 784V796M760.5 786V801M761.5 786V800M762.5 787V798M763.5 788V797M764.5 786V803M765.5 786V800M766.5 787V801M767.5 790V803M768.5 785V805M823.5 695V716M824.5 697V714M825.5 692V708M826.5 693V719M827.5 693V709M828.5 689V709M829.5 697V703M830.5 690V716M831.5 695V707M832.5 690V701M833.5 690V702M834.5 690V716M835.5 691V707M836.5 690V702M837.5 689V706M838.5 690V717M839.5 687V702M840.5 686V703M841.5 686V698M842.5 687V702M843.5 687V698M844.5 676V698M845.5 685V702M846.5 686V701M847.5 685V698M848.5 684V698M849.5 686V701M850.5 685V699M851.5 681V696M852.5 680V698M853.5 681V694M854.5 680V697M855.5 682V696M856.5 681V697M857.5 679V697M858.5 682V699M859.5 682V698M860.5 678V694M861.5 669V697M862.5 680V696M863.5 679V713M908.5 524V575M909.5 524V573M910.5 533V582M911.5 529V565M912.5 510V563M913.5 509V563M914.5 511V562M915.5 522V550M916.5 512V556M917.5 499V560M918.5 501V549M919.5 507V550M920.5 499V531M921.5 496V547M922.5 491V545M923.5 506V549M924.5 491V541M925.5 487V536M926.5 486V534M927.5 492V538M928.5 489V526M929.5 483V525M930.5 492V532M931.5 478V529M932.5 477V532M933.5 475V527M934.5 480V516M935.5 483V517M936.5 481V521M937.5 468V531M938.5 465V521M939.5 482V513M940.5 462V513M941.5 462V513M942.5 472V516M943.5 463V513M944.5 464V509M945.5 449V495M946.5 456V513M947.5 456V500M948.5 466V495M949.5 452V498M950.5 467V508M951.5 458V491M952.5 451V496M953.5 445V501M954.5 443V478M1045.5 535V558M1046.5 533V562M1047.5 527V561M1048.5 508V556M1049.5 546V552M1050.5 525V599M1051.5 522V578M1052.5 518V565M1053.5 533V569M1054.5 539V566M1055.5 524V568M1056.5 527V565M1057.5 523V565M1058.5 521V562M1059.5 529V557M1060.5 538V547M1061.5 517V548M1062.5 520V566M1063.5 521V554M1064.5 541V546M1065.5 517V565M1066.5 531V564M1067.5 523V565M1068.5 524V545M1069.5 521V564M1070.5 523V563M1071.5 531V556M1072.5 506V566M1073.5 519V560M1074.5 518V581M1075.5 516V567M1076.5 522V545M1077.5 521V565M1078.5 524V553M1079.5 540V558M1080.5 539V552M1081.5 544V575M1082.5 541V572M1083.5 521V557M1084.5 541V551M1085.5 541V561M1086.5 507V565M1087.5 537V569M1088.5 523V559M1089.5 528V572M1090.5 535V568M1091.5 524V557M1092.5 517V563M1093.5 521V565M1094.5 530V557M1095.5 514V575M1096.5 526V549M1097.5 538V567M1098.5 521V604M1099.5 524V566M1100.5 532V569M1101.5 543V569M1102.5 513V573M1103.5 544V590M1104.5 525V550M1105.5 524V569M1106.5 526V581M1107.5 509V567M1108.5 495V570M1109.5 527V569M1110.5 525V563M1111.5 527V550M1112.5 529V556M1113.5 534V564M1114.5 533V579M1115.5 526V567M1116.5 544V564M1117.5 526V565M1118.5 541V604M1119.5 537V557M1120.5 523V565M1121.5 527V574M1122.5 525V567M1123.5 529V568M1124.5 538V562M1125.5 515V562M1126.5 515V551M1127.5 510V553M1128.5 489V548M1129.5 509V554M1130.5 504V569M1131.5 511V546M1132.5 527V537M1133.5 526V556M1134.5 518V580M1135.5 510V539M1136.5 511V545M1137.5 507V562M1138.5 506V552M1139.5 507V536M1140.5 492V551M1141.5 519V549M1142.5 514V541M1143.5 504V553M1144.5 507V551M1145.5 493V550M1146.5 514V542M1147.5 503V535M1148.5 507V553M1149.5 507V578M1150.5 507V552M1151.5 505V549M1152.5 520V537M1153.5 508V543M1154.5 491V551M1155.5 504V546M1156.5 508V556M1157.5 500V555M1158.5 527V568M1159.5 518V548M1160.5 513V555M1161.5 521V553M1162.5 506V562M1163.5 509V553M1164.5 492V547M1165.5 515V555M1166.5 492V554M1167.5 504V552M1168.5 527V570M1169.5 510V554M1170.5 518V578M1171.5 508V549M1172.5 511V541M1173.5 501V546M1174.5 508V549M1175.5 501V552M1176.5 512V559M1177.5 502V550M1178.5 505V535M1179.5 510V551M1180.5 523V548M1181.5 498V535M1182.5 503V541M1183.5 504V541M1184.5 513V552M1185.5 508V532M1186.5 492V540M1187.5 501V551M1188.5 470V552M1189.5 472V553M1190.5 515V555M1191.5 509V546M1192.5 515V531M1193.5 503V548M1194.5 500V547M1195.5 517V536M1196.5 508V531M1197.5 499V550M1203.5 456V509M1204.5 467V528M1205.5 459V501M1206.5 451V516M1207.5 455V513M1208.5 454V511M1209.5 456V515M1210.5 432V524M1211.5 451V517M1212.5 448V514M1213.5 450V497M1214.5 441V510M1215.5 459V498M1216.5 455V512M1217.5 454V492M1218.5 455V511M1219.5 445V508M1220.5 458V509M1221.5 443V513M1222.5 450V503M1223.5 450V499M1224.5 458V512M1225.5 444V498M1226.5 450V493M1227.5 423V502M1228.5 444V511M1229.5 454V509M1230.5 458V505M1231.5 437V510M1232.5 459V507M1233.5 434V517M1234.5 433V503M1235.5 457V508M1236.5 432V506M1237.5 431V505M1238.5 454V506M1239.5 438V500M1240.5 460V503M1241.5 438V508M1242.5 448V500M1243.5 442V522M1244.5 447V511M1245.5 429V513M1246.5 428V502M1247.5 451V497M1248.5 448V513M1249.5 464V531M1250.5 464V507M1251.5 468V496M1252.5 447V511M1253.5 448V510M1254.5 451V511M1255.5 467V514M1256.5 459V498M1257.5 447V510M1258.5 468V508M1259.5 448V500M1260.5 448V502M1261.5 454V506M1262.5 470V509M1263.5 463V501M1264.5 449V512M1265.5 450V502M1266.5 461V495M1267.5 459V505M1268.5 442V503M1269.5 453V511M1270.5 460V507M1271.5 451V505M1272.5 460V497M1273.5 454V526M1274.5 459V501M1275.5 453V519M1276.5 465V515M1277.5 455V512M1278.5 462V494M1279.5 456V513M1280.5 472V507M1281.5 455V506M1282.5 456V503M1283.5 457V502M1284.5 471V513M1285.5 469V508M1286.5 464V505M1287.5 465V516M1288.5 475V509M1289.5 476V514M1290.5 467V514M1291.5 464V498M1292.5 460V514M1293.5 463V505M1294.5 462V501M1295.5 455V513M1296.5 455V496M1297.5 456V501M1298.5 457V510M1299.5 477V514M1300.5 463V512M1301.5 460V510M1302.5 459V498M1303.5 479V513M1304.5 469V519M1305.5 469V510M1306.5 460V523M1307.5 461V501M1308.5 462V500M1309.5 461V504M1310.5 467V512M1311.5 459V511M1312.5 470V507M1313.5 465V499M1314.5 461V506M1315.5 477V519M1316.5 465V518M1317.5 444V510M1318.5 476V506M1319.5 463V499M1320.5 469V516M1321.5 462V514M1322.5 478V509M1323.5 463V516M1324.5 477V509M1325.5 466V511M1326.5 474V508M1327.5 462V511M1328.5 475V512M1329.5 450V498M1330.5 465V511M1331.5 461V505M1332.5 473V497M1333.5 466V504M1334.5 446V516M1335.5 471V497M1336.5 465V508M1337.5 480V508M1338.5 471V513M1339.5 473V513M1340.5 465V513M1341.5 470V503M1342.5 478V516M1343.5 475V507M1344.5 473V512M1345.5 476V510M1346.5 463V509M1347.5 468V512M1348.5 462V505M1349.5 461V533M1350.5 480V512M1351.5 461V511M1352.5 461V515M1353.5 472V516M1354.5 477V513M1355.5 464V515M1356.5 460V513M1357.5 461V515M1358.5 465V507M1359.5 476V505M1360.5 466V522M1361.5 472V503M1362.5 472V514M1363.5 478V498M1364.5 468V517M1365.5 466V499M1366.5 468V503M1367.5 465V512M1368.5 464V512M1369.5 463V504M1370.5 474V496M1371.5 463V510M1372.5 459V498M1373.5 467V502M1374.5 459V503M1375.5 458V510M1376.5 475V501M1377.5 462V508M1378.5 458V497M1379.5 468V527M1380.5 474V498M1381.5 458V510M1382.5 456V507M1383.5 462V502M1384.5 447V498M1385.5 452V488M1386.5 461V498M1387.5 447V494M1388.5 457V482M1389.5 443V486M1390.5 436V483M1391.5 431V470M1392.5 431V474M1393.5 428V470M1412.5 540V574M1413.5 544V560M1414.5 530V561M1415.5 526V567M1416.5 521V561M1417.5 529V558M1418.5 515V556M1419.5 521V560M1420.5 510V546M1421.5 513V546M1422.5 515V548M1423.5 506V543M1487.5 463V509M1488.5 470V509M1489.5 465V515M1490.5 466V517M1491.5 463V520M1492.5 470V511M1493.5 456V504M1494.5 459V520M1495.5 470V505M1496.5 460V518M1497.5 457V520M1498.5 476V505M1499.5 469V512M1500.5 474V516M1501.5 470V516M1502.5 464V508M1503.5 462V516M1504.5 476V517M1505.5 460V519M1506.5 480V518M1507.5 461V519M1508.5 461V506M1509.5 467V534M1510.5 462V507M1511.5 467V516M1512.5 462V510M1513.5 461V505M1514.5 444V517M1515.5 461V515M1516.5 451V513M1517.5 477V503M1518.5 460V499M1519.5 480V510M1520.5 475V514M1521.5 459V505M1522.5 465V499M1523.5 465V503M1524.5 459V510M1525.5 475V536M1526.5 462V508M1527.5 457V502M1528.5 458V499M1529.5 460V514M1530.5 458V514M1531.5 468V540M1532.5 457V505M1533.5 461V504M1534.5 457V497M1535.5 463V512M1536.5 461V504M1537.5 457V512M1538.5 474V518M1539.5 464V511M1540.5 458V516M1541.5 469V508M1542.5 466V495M1543.5 458V492M1544.5 459V509M1545.5 460V505M1546.5 473V509M1547.5 473V506M1548.5 451V511M1549.5 458V503M1550.5 459V515M1551.5 465V492M1552.5 459V497M1553.5 451V496M1554.5 453V506M1564.5 446V503M1565.5 406V501M1566.5 435V484M1567.5 443V487M1568.5 432V485M1569.5 440V471M1570.5 429V483M1571.5 425V466M1572.5 435V482M1573.5 422V467M1574.5 440V474M1575.5 426V491M1576.5 425V473M1577.5 421V462M1578.5 429V468M1579.5 415V461M1580.5 386V456M1581.5 421V446M1582.5 425V462M1583.5 409V455M1584.5 412V457M1585.5 419V459M1586.5 410V455M1587.5 409V441M1588.5 396V447M1589.5 402V442M1590.5 403V445M1591.5 390V445M1592.5 392V438M1593.5 405V430M1594.5 393V438M1595.5 400V444M1596.5 401V438M1597.5 393V457M1598.5 400V461M1599.5 386V440M1600.5 397V440M1601.5 355V440M1602.5 396V437M1603.5 403V470M1604.5 392V433M1605.5 404V441M1606.5 385V430M1607.5 401V437M1608.5 380V435M1609.5 380V438M1610.5 398V437M1611.5 398V427M1612.5 378V435M1613.5 375V441M1614.5 379V450M1615.5 375V437M1616.5 374V427M1617.5 363V419M1618.5 367V409M1619.5 367V418M1620.5 351V425M1621.5 365V406M1622.5 341V392M1623.5 363V417M1624.5 334V404M1625.5 330V393M1626.5 325V425M1627.5 322V424M1628.5 339V432M1629.5 357V431M1630.5 324V469M1631.5 335V423M1632.5 331V422M1633.5 338V417M1634.5 358V401M1635.5 327V413M1636.5 334V412M1637.5 355V412M1638.5 345V404M1639.5 339V405M1640.5 361V403M1641.5 344V413M1642.5 348V410M1643.5 359V423M1644.5 350V401M1645.5 331V430M1646.5 332V413M1647.5 316V414M1648.5 302V378M1649.5 289V398M1650.5 293V406M1651.5 332V377M1652.5 303V416M1653.5 328V402M1654.5 319V414M1655.5 305V398M1656.5 313V430M1657.5 323V400M1658.5 308V398M1659.5 333V427M1660.5 308V404M1661.5 327V434M1662.5 326V416M1663.5 317V400M1664.5 328V416M1665.5 343V407M1666.5 320V405M1667.5 339V398M1668.5 349V414M1669.5 342V413M1670.5 356V391M1671.5 353V418M1672.5 315V408M1673.5 362V393M1674.5 346V404M1675.5 369V418M1676.5 348V415M1677.5 342V413M1678.5 339V395M1679.5 337V386M1680.5 344V403M1681.5 357V409M1682.5 310V438M1683.5 327V391M1684.5 320V387M1685.5 328V374M1686.5 317V400M1687.5 316V407M1688.5 332V387M1689.5 302V410M1690.5 340V384M1691.5 337V401M1692.5 310V422M1693.5 319V411M1694.5 317V415M1695.5 313V411M1696.5 339V420M1697.5 309V413M1698.5 304V406M1699.5 325V405M1700.5 324V401M1701.5 321V413M1702.5 308V412M1703.5 331V418M1704.5 346V413M1705.5 341V408M1706.5 336V413M1707.5 320V434M1708.5 317V384M1709.5 308V401M1710.5 333V413M1711.5 320V409M1712.5 345V412M1713.5 328V414M1714.5 325V402M1715.5 352V385M1716.5 327V409M1717.5 322V381M1718.5 302V393M1719.5 327V405M1720.5 319V386M1721.5 331V388M1722.5 301V410M1723.5 301V384M1724.5 318V394M1725.5 292V388M1726.5 283V390M1727.5 286V361M1728.5 283V386M1729.5 285V365M1730.5 273V426M1731.5 280V362M1732.5 304V396M1733.5 274V386M1734.5 292V386M1735.5 308V376M1736.5 312V387M1737.5 318V379M1753.5 308V360M1754.5 291V351M1755.5 312V356M1756.5 293V387M1757.5 301V367M1758.5 277V387M1759.5 279V389M1760.5 241V383M1761.5 261V390M1762.5 298V394M1763.5 281V366M1764.5 281V368M1765.5 270V369M1766.5 275V376M1767.5 278V344M1768.5 279V343M1780.5 270V385M1781.5 262V376M1782.5 283V358M1783.5 290V387M1784.5 276V392M1785.5 290V376M1786.5 256V382M1787.5 256V368M1788.5 291V383M1789.5 298V356M1790.5 277V384M1791.5 249V374M1792.5 254V374M1795.5 515V562M1796.5 534V561M1797.5 526V565M1798.5 516V560M1799.5 530V550M1800.5 522V558M1801.5 515V548M1802.5 527V559M1803.5 509V543M1804.5 508V547M1805.5 510V555M1806.5 518V548M1807.5 516V545M1808.5 518V546" stroke="url(#gy)" stroke-width="1" fill="none"/><path d="M718.5 809V842M822.5 696V731M864.5 668V842M909.5 560V640M920.5 548V588M1063.5 545V842M1136.5 545V705M1195.5 520V842M1198.5 470V842M1202.5 455V842M1205.5 470V842M1207.5 450V842M1210.5 462V842M1212.5 455V842M1215.5 470V842M1394.5 470V842M1395.5 500V842M1412.5 575V842M1498.5 520V560M1488.5 520V540M1613.5 430V578M1634.5 415V520M1665.5 415V555M1705.5 420V484M1628.5 304V340M1733.5 250V300M1589.5 362V400" stroke="url(#gl)" stroke-width="1" fill="none" opacity=".9"/><path d="M919.5 332v1.6M919.5 359v1.6M919.5 279v1.6M919.5 236v1.6M919.5 464v1.6M919.5 398v1.6M919.5 271v1.6M919.5 419v1.6M919.5 407v1.6M919.5 284v1.6M919.5 272v1.6M919.5 248v1.6M919.5 200v1.6M919.5 262v1.6M919.5 441v1.6M919.5 457v1.6M919.5 550v1.6M919.5 597v1.6M919.5 472v1.6M1144.5 355v1.6M1144.5 472v1.6M1144.5 278v1.6M1144.5 211v1.6M1144.5 461v1.6M1144.5 372v1.6M1144.5 462v1.6M1144.5 228v1.6M1144.5 434v1.6M1144.5 366v1.6M1144.5 443v1.6M1144.5 291v1.6M1144.5 213v1.6M1144.5 379v1.6M1144.5 299v1.6M1144.5 248v1.6M1144.5 248v1.6M1144.5 230v1.6M1144.5 372v1.6M1144.5 419v1.6M1144.5 230v1.6M1144.5 257v1.6M1144.5 431v1.6M1144.5 272v1.6M1144.5 367v1.6M1144.5 257v1.6M1144.5 430v1.6M1144.5 365v1.6M1144.5 491v1.6M1144.5 520v1.6M1144.5 560v1.6M1144.5 508v1.6M1144.5 496v1.6M1194.5 319v1.6M1194.5 206v1.6M1194.5 217v1.6M1194.5 234v1.6M1194.5 290v1.6M1194.5 445v1.6M1194.5 468v1.6M1194.5 319v1.6M1194.5 422v1.6M1194.5 447v1.6M1194.5 492v1.6M1194.5 267v1.6M1194.5 410v1.6M1194.5 469v1.6M1194.5 424v1.6M1194.5 213v1.6M1194.5 450v1.6M1194.5 431v1.6M1194.5 379v1.6M1194.5 212v1.6M1194.5 224v1.6M1194.5 202v1.6M1194.5 366v1.6M1194.5 379v1.6M1194.5 230v1.6M1194.5 450v1.6M1194.5 323v1.6M1194.5 242v1.6M1194.5 376v1.6M1194.5 279v1.6M1194.5 264v1.6M1194.5 263v1.6M1194.5 436v1.6M1194.5 230v1.6M1194.5 271v1.6M1194.5 242v1.6M1194.5 400v1.6M1194.5 403v1.6M1194.5 328v1.6M1194.5 246v1.6M1200.5 208v1.6M1200.5 321v1.6M1200.5 280v1.6M1200.5 213v1.6M1200.5 285v1.6M1200.5 309v1.6M1200.5 230v1.6M1200.5 323v1.6M1200.5 372v1.6M1200.5 440v1.6M1200.5 439v1.6M1200.5 571v1.6M1200.5 450v1.6M1200.5 514v1.6M1141.5 455v1.6M1141.5 415v1.6M1141.5 431v1.6M1141.5 431v1.6M1141.5 420v1.6M1141.5 408v1.6M1141.5 405v1.6M1141.5 479v1.6M1195.5 511v1.6M1195.5 419v1.6M1195.5 519v1.6M1195.5 441v1.6M1195.5 491v1.6M1195.5 456v1.6M1195.5 457v1.6M1195.5 451v1.6M1195.5 404v1.6M1195.5 462v1.6M1195.5 430v1.6M1195.5 510v1.6M1195.5 476v1.6M1195.5 434v1.6M1195.5 500v1.6M1195.5 470v1.6M1195.5 476v1.6M1195.5 488v1.6M1195.5 488v1.6M1195.5 426v1.6M1195.5 504v1.6M1195.5 489v1.6M1195.5 491v1.6M1195.5 489v1.6" stroke="url(#gy)" stroke-width="1.2" fill="none" opacity=".85"/><path d="M1349.0 805.0h1.6M1487.0 803.0h1.6M1565.6 788.0h1.6M1564.7 802.7h1.6M1624.7 746.0h1.6M1753.0 732.5h1.6M1781.0 700.0h1.6M1045.7 832.0h1.6M1124.5 826.0h1.6M1147.0 657.5h1.6M920.0 689.0h1.6M920.0 595.8h1.6M1231.8 787.6h1.6M730.0 735.5h1.6" stroke="#7ee000" stroke-width="1.4" fill="none"/><rect x="1353" y="657" width="2" height="2" fill="#e01818"/></svg>
<div class="lbl" style="left:567px;top:143px;width:291px;height:28px;line-height:28px">F41 - Temps bouchon Nord inducteur 3</div>
<div class="lbl" style="left:1835px;top:862px;width:60px;height:28px;line-height:28px">Date</div>
<div class="lbl" style="left:1835px;top:143px;width:60px;height:32px"></div>
<svg style="left:1835px;top:143px" width="60" height="32" viewBox="0 0 60 32"><rect x="10.3" y="9.8" width="14.2" height="14.2" fill="#ecece2" stroke="#111" stroke-width="1.3"/><rect x="14" y="13.5" width="7" height="7" fill="#8c8c8c"/><path d="M22.5 21.6h5.6l-2.8 2.8z" fill="#111"/><path d="M50.4 9.4V23.8 M48.6 9.4h2.4 M47.8 22h2.4 M48.6 23.8h2.4" stroke="#111" stroke-width="1.1" fill="none"/><text x="35.4" y="21.2" font-family="DejaVu Sans, sans-serif" font-size="10" fill="#222" textLength="11.5" lengthAdjust="spacingAndGlyphs">Ab</text></svg>
<div class="abs" style="left:1898px;top:141px;width:14px;height:751px;background:#fbfaf9"></div>
<div class="abs" style="left:1899px;top:155px;width:12px;height:221px;background:#e6e3df;border:1px solid #d8d5d0"></div><div class="abs" style="left:1899px;top:677px;width:12px;height:201px;background:#e6e3df;border:1px solid #d8d5d0"></div>
<svg style="left:1898px;top:141px" width="14" height="751" viewBox="0 0 14 751"><path d="M3 10h8l-4 -4.5z M3 742h8l-4 4.5z" fill="#222"/></svg>
<div class="abs" style="left:565px;top:892px;width:1333px;height:14px;background:#fbfaf9"></div>
<div class="abs" style="left:578px;top:893px;width:152px;height:12px;background:#e6e3df;border:1px solid #d2cfca"></div>
<div class="abs" style="left:1765px;top:893px;width:119px;height:12px;background:#e6e3df;border:1px solid #d2cfca"></div>
<svg style="left:565px;top:892px" width="1333" height="14" viewBox="0 0 1333 14"><path d="M10 3v8l-4.5 -4z M1323 3v8l4.5 -4z" fill="#222"/></svg>
<div class="abs" style="left:1898px;top:893px;width:14px;height:13px;background:#9966cc"></div>
<div class="phead" style="left:51px;top:912.2px;width:1598px;height:19.6px;font-weight:bold">Listing [1 (default/default)]</div>
<div class="abs" style="left:51px;top:932px;width:1598px;height:64px;background:#fff"></div>
<div class="hc" style="left:51px;width:68px"></div>
<div class="abs" style="left:51px;top:951px;width:67px;height:23px;background:linear-gradient(#e9e8e6,#dddbd8);border-right:1px solid #c9c6c1;font-family:'Liberation Sans',sans-serif;font-size:11px;line-height:31px;text-align:right;padding-right:7px">1</div>
<div class="hc" style="left:119.00px;width:100.17px">F41 - Mesure co</div>
<div class="dc" style="left:119.00px;width:100.17px">0.992200017</div>
<div class="hc" style="left:219.17px;width:100.17px">F41 - Mesure co</div>
<div class="dc" style="left:219.17px;width:100.17px">-0.804350019</div>
<div class="hc" style="left:319.34px;width:100.17px">F41 - Mesure co</div>
<div class="dc" style="left:319.34px;width:100.17px">0.239350006</div>
<div class="hc" style="left:419.51px;width:100.17px">F41 - Mesure co</div>
<div class="dc" style="left:419.51px;width:100.17px">0.313300014</div>
<div class="hc" style="left:519.68px;width:100.17px">F41 - Mesure co</div>
<div class="dc" style="left:519.68px;width:100.17px">0.316199988</div>
<div class="hc" style="left:619.85px;width:100.17px">F41 - Mesure co</div>
<div class="dc" style="left:619.85px;width:100.17px">0.266900003</div>
<div class="hc" style="left:720.02px;width:100.17px">F41 - Temps bou</div>
<div class="dc" style="left:720.02px;width:100.17px">483.200012</div>
<div class="hc" style="left:820.19px;width:100.17px">F41 - Temps bou</div>
<div class="dc" style="left:820.19px;width:100.17px">163</div>
<div class="hc" style="left:920.36px;width:100.17px">F41 - Temps bou</div>
<div class="dc" style="left:920.36px;width:100.17px">22.2999992</div>
<div class="hc" style="left:1020.53px;width:100.17px">F41 - Temps bou</div>
<div class="dc" style="left:1020.53px;width:100.17px">558.200012</div>
<div class="hc" style="left:1120.70px;width:100.17px">Date</div>
<div class="dc" style="left:1120.70px;width:100.17px">12.04.2015 07:…</div>
<div class="hc" style="left:1220.87px;width:100.17px">F41 - Temps bou</div>
<div class="dc" style="left:1220.87px;width:100.17px">215.800003</div>
<div class="hc" style="left:1321.04px;width:100.17px">F41 - Temps bou</div>
<div class="dc" style="left:1321.04px;width:100.17px">430.950012</div>
<div class="hc" style="left:1421.21px;width:100.17px">F41 -Temps bouc</div>
<div class="dc" style="left:1421.21px;width:100.17px">433.799988</div>
<div class="hc" style="left:1521.38px;width:100.17px">F41 - Temps bou</div>
<div class="dc" style="left:1521.38px;width:100.17px">625.799988</div>
<div class="hc" style="left:1621.55px;width:8.17px">F</div>
<div class="dc" style="left:1621.55px;width:8.17px">:</div>
<div class="abs" style="left:1016.5px;top:951px;width:6px;height:23px;background:repeating-linear-gradient(-62deg,#ff8c1a 0,#ff8c1a 3px,#4a4a52 3px,#4a4a52 6px)"></div>
<div class="abs" style="left:1116.5px;top:951px;width:6px;height:23px;background:repeating-linear-gradient(-62deg,#ff8c1a 0,#ff8c1a 3px,#4a4a52 3px,#4a4a52 6px)"></div>
<div class="abs" style="left:1628px;top:932px;width:21px;height:43px;background:#f6f5f3"></div>
<div class="abs" style="left:1628px;top:952.5px;width:21px;height:2px;background:#a974d6"></div>
<svg style="left:1628px;top:932px" width="21" height="43" viewBox="0 0 21 43"><path d="M6.5 12 L10.5 8 L14.5 12 M6.5 31 L10.5 35 L14.5 31" stroke="#555" stroke-width="1.3" fill="none"/></svg>
<div class="abs" style="left:51px;top:975px;width:21px;height:21px;background:#f4f3f1"></div><div class="abs" style="left:1607px;top:975px;width:21px;height:21px;background:#f4f3f1"></div>
<div class="abs" style="left:1629px;top:976px;width:20px;height:20px;background:#efebe7;border:1px solid #dad6d0"></div>
<svg style="left:51px;top:975px" width="1580" height="21" viewBox="0 0 1580 21"><path d="M21.5 0V21 M1556.5 0V21" stroke="#a974d6" stroke-width="1"/><path d="M22 9.5H1556" stroke="#dcaee8" stroke-width="1"/><rect x="177" y="6.5" width="232" height="6" fill="#666"/><path d="M13 5.5 L9.5 9.5 L13 13.5 M1565 5.5 L1568.5 9.5 L1565 13.5" stroke="#555" stroke-width="1.3" fill="none"/></svg>
<div class="abs" style="left:51px;top:996.5px;width:1598px;height:10.5px;background:#9966cc"></div>
<div class="abs" style="left:846px;top:1003px;width:8px;height:1px;background:repeating-linear-gradient(90deg,#5a3a80 0,#5a3a80 1px,transparent 1px,transparent 3px)"></div>
<div class="abs" style="left:51px;top:1007px;width:1598px;height:30px;background:#f9d8d8"></div>
<div class="abs" style="left:51px;top:1007px;width:68px;height:30px;background:linear-gradient(#f7f6f4,#e6e4e0);border-right:1px solid #c9c6c1;font-size:12px;line-height:14px;padding:2px 0 0 3px">distinct<br>values</div>
<div class="nc" style="left:119.00px;width:100.17px">N/A</div>
<svg style="left:176.0px;top:1014px" width="40" height="15" viewBox="0 0 40 15"><rect x="1.4" y="3.9" width="13.2" height="9.3" rx="2" fill="#fff" stroke="#2a1a1a" stroke-width="1.7"/><path d="M4.1 7.9h8" stroke="#000" stroke-width="1.7" fill="none"/><path d="M5.4 10.6h6.7" stroke="#4a1212" stroke-width="1.6" fill="none"/><path d="M3.4 10.6h1.4" stroke="#a05050" stroke-width="1.4" fill="none"/><path d="M29.5 1.2 C26 1.8 24 4.4 24 8 L22 8 L25.6 11.8 L29.2 8 L27.2 8 C27.2 5.4 28 3.2 29.5 1.2 Z" fill="#9aa2a2" stroke="#5a5656" stroke-width=".8" stroke-linejoin="round"/><path d="M29.6 12.6 C33.4 12 35.4 9.6 35.6 6 L38 6 L34.2 2.2 L30.6 6 L32.6 6 C32.4 8.8 31.4 11 29.6 12.6 Z" fill="#9aa2a2" stroke="#5a5656" stroke-width=".8" stroke-linejoin="round"/></svg>
<div class="nc" style="left:219.17px;width:100.17px">N/A</div>
<svg style="left:276.2px;top:1014px" width="40" height="15" viewBox="0 0 40 15"><rect x="1.4" y="3.9" width="13.2" height="9.3" rx="2" fill="#fff" stroke="#2a1a1a" stroke-width="1.7"/><path d="M4.1 7.9h8" stroke="#000" stroke-width="1.7" fill="none"/><path d="M5.4 10.6h6.7" stroke="#4a1212" stroke-width="1.6" fill="none"/><path d="M3.4 10.6h1.4" stroke="#a05050" stroke-width="1.4" fill="none"/><path d="M29.5 1.2 C26 1.8 24 4.4 24 8 L22 8 L25.6 11.8 L29.2 8 L27.2 8 C27.2 5.4 28 3.2 29.5 1.2 Z" fill="#9aa2a2" stroke="#5a5656" stroke-width=".8" stroke-linejoin="round"/><path d="M29.6 12.6 C33.4 12 35.4 9.6 35.6 6 L38 6 L34.2 2.2 L30.6 6 L32.6 6 C32.4 8.8 31.4 11 29.6 12.6 Z" fill="#9aa2a2" stroke="#5a5656" stroke-width=".8" stroke-linejoin="round"/></svg>
<div class="nc" style="left:319.34px;width:100.17px">N/A</div>
<svg style="left:376.3px;top:1014px" width="40" height="15" viewBox="0 0 40 15"><rect x="1.4" y="3.9" width="13.2" height="9.3" rx="2" fill="#fff" stroke="#2a1a1a" stroke-width="1.7"/><path d="M4.1 7.9h8" stroke="#000" stroke-width="1.7" fill="none"/><path d="M5.4 10.6h6.7" stroke="#4a1212" stroke-width="1.6" fill="none"/><path d="M3.4 10.6h1.4" stroke="#a05050" stroke-width="1.4" fill="none"/><path d="M29.5 1.2 C26 1.8 24 4.4 24 8 L22 8 L25.6 11.8 L29.2 8 L27.2 8 C27.2 5.4 28 3.2 29.5 1.2 Z" fill="#9aa2a2" stroke="#5a5656" stroke-width=".8" stroke-linejoin="round"/><path d="M29.6 12.6 C33.4 12 35.4 9.6 35.6 6 L38 6 L34.2 2.2 L30.6 6 L32.6 6 C32.4 8.8 31.4 11 29.6 12.6 Z" fill="#9aa2a2" stroke="#5a5656" stroke-width=".8" stroke-linejoin="round"/></svg>
<div class="nc" style="left:419.51px;width:100.17px">N/A</div>
<svg style="left:476.5px;top:1014px" width="40" height="15" viewBox="0 0 40 15"><rect x="1.4" y="3.9" width="13.2" height="9.3" rx="2" fill="#fff" stroke="#2a1a1a" stroke-width="1.7"/><path d="M4.1 7.9h8" stroke="#000" stroke-width="1.7" fill="none"/><path d="M5.4 10.6h6.7" stroke="#4a1212" stroke-width="1.6" fill="none"/><path d="M3.4 10.6h1.4" stroke="#a05050" stroke-width="1.4" fill="none"/><path d="M29.5 1.2 C26 1.8 24 4.4 24 8 L22 8 L25.6 11.8 L29.2 8 L27.2 8 C27.2 5.4 28 3.2 29.5 1.2 Z" fill="#9aa2a2" stroke="#5a5656" stroke-width=".8" stroke-linejoin="round"/><path d="M29.6 12.6 C33.4 12 35.4 9.6 35.6 6 L38 6 L34.2 2.2 L30.6 6 L32.6 6 C32.4 8.8 31.4 11 29.6 12.6 Z" fill="#9aa2a2" stroke="#5a5656" stroke-width=".8" stroke-linejoin="round"/></svg>
<div class="nc" style="left:519.68px;width:100.17px">N/A</div>
<svg style="left:576.7px;top:1014px" width="40" height="15" viewBox="0 0 40 15"><rect x="1.4" y="3.9" width="13.2" height="9.3" rx="2" fill="#fff" stroke="#2a1a1a" stroke-width="1.7"/><path d="M4.1 7.9h8" stroke="#000" stroke-width="1.7" fill="none"/><path d="M5.4 10.6h6.7" stroke="#4a1212" stroke-width="1.6" fill="none"/><path d="M3.4 10.6h1.4" stroke="#a05050" stroke-width="1.4" fill="none"/><path d="M29.5 1.2 C26 1.8 24 4.4 24 8 L22 8 L25.6 11.8 L29.2 8 L27.2 8 C27.2 5.4 28 3.2 29.5 1.2 Z" fill="#9aa2a2" stroke="#5a5656" stroke-width=".8" stroke-linejoin="round"/><path d="M29.6 12.6 C33.4 12 35.4 9.6 35.6 6 L38 6 L34.2 2.2 L30.6 6 L32.6 6 C32.4 8.8 31.4 11 29.6 12.6 Z" fill="#9aa2a2" stroke="#5a5656" stroke-width=".8" stroke-linejoin="round"/></svg>
<div class="nc" style="left:619.85px;width:100.17px">N/A</div>
<svg style="left:676.9px;top:1014px" width="40" height="15" viewBox="0 0 40 15"><rect x="1.4" y="3.9" width="13.2" height="9.3" rx="2" fill="#fff" stroke="#2a1a1a" stroke-width="1.7"/><path d="M4.1 7.9h8" stroke="#000" stroke-width="1.7" fill="none"/><path d="M5.4 10.6h6.7" stroke="#4a1212" stroke-width="1.6" fill="none"/><path d="M3.4 10.6h1.4" stroke="#a05050" stroke-width="1.4" fill="none"/><path d="M29.5 1.2 C26 1.8 24 4.4 24 8 L22 8 L25.6 11.8 L29.2 8 L27.2 8 C27.2 5.4 28 3.2 29.5 1.2 Z" fill="#9aa2a2" stroke="#5a5656" stroke-width=".8" stroke-linejoin="round"/><path d="M29.6 12.6 C33.4 12 35.4 9.6 35.6 6 L38 6 L34.2 2.2 L30.6 6 L32.6 6 C32.4 8.8 31.4 11 29.6 12.6 Z" fill="#9aa2a2" stroke="#5a5656" stroke-width=".8" stroke-linejoin="round"/></svg>
<div class="nc" style="left:720.02px;width:100.17px">N/A</div>
<svg style="left:777.0px;top:1014px" width="40" height="15" viewBox="0 0 40 15"><rect x="1.4" y="3.9" width="13.2" height="9.3" rx="2" fill="#fff" stroke="#2a1a1a" stroke-width="1.7"/><path d="M4.1 7.9h8" stroke="#000" stroke-width="1.7" fill="none"/><path d="M5.4 10.6h6.7" stroke="#4a1212" stroke-width="1.6" fill="none"/><path d="M3.4 10.6h1.4" stroke="#a05050" stroke-width="1.4" fill="none"/><path d="M29.5 1.2 C26 1.8 24 4.4 24 8 L22 8 L25.6 11.8 L29.2 8 L27.2 8 C27.2 5.4 28 3.2 29.5 1.2 Z" fill="#9aa2a2" stroke="#5a5656" stroke-width=".8" stroke-linejoin="round"/><path d="M29.6 12.6 C33.4 12 35.4 9.6 35.6 6 L38 6 L34.2 2.2 L30.6 6 L32.6 6 C32.4 8.8 31.4 11 29.6 12.6 Z" fill="#9aa2a2" stroke="#5a5656" stroke-width=".8" stroke-linejoin="round"/></svg>
<div class="nc" style="left:820.19px;width:100.17px">N/A</div>
<svg style="left:877.2px;top:1014px" width="40" height="15" viewBox="0 0 40 15"><rect x="1.4" y="3.9" width="13.2" height="9.3" rx="2" fill="#fff" stroke="#2a1a1a" stroke-width="1.7"/><path d="M4.1 7.9h8" stroke="#000" stroke-width="1.7" fill="none"/><path d="M5.4 10.6h6.7" stroke="#4a1212" stroke-width="1.6" fill="none"/><path d="M3.4 10.6h1.4" stroke="#a05050" stroke-width="1.4" fill="none"/><path d="M29.5 1.2 C26 1.8 24 4.4 24 8 L22 8 L25.6 11.8 L29.2 8 L27.2 8 C27.2 5.4 28 3.2 29.5 1.2 Z" fill="#9aa2a2" stroke="#5a5656" stroke-width=".8" stroke-linejoin="round"/><path d="M29.6 12.6 C33.4 12 35.4 9.6 35.6 6 L38 6 L34.2 2.2 L30.6 6 L32.6 6 C32.4 8.8 31.4 11 29.6 12.6 Z" fill="#9aa2a2" stroke="#5a5656" stroke-width=".8" stroke-linejoin="round"/></svg>
<div class="nc" style="left:920.36px;width:100.17px">N/A</div>
<svg style="left:977.4px;top:1014px" width="40" height="15" viewBox="0 0 40 15"><rect x="1.4" y="3.9" width="13.2" height="9.3" rx="2" fill="#fff" stroke="#2a1a1a" stroke-width="1.7"/><path d="M4.1 7.9h8" stroke="#000" stroke-width="1.7" fill="none"/><path d="M5.4 10.6h6.7" stroke="#4a1212" stroke-width="1.6" fill="none"/><path d="M3.4 10.6h1.4" stroke="#a05050" stroke-width="1.4" fill="none"/><path d="M29.5 1.2 C26 1.8 24 4.4 24 8 L22 8 L25.6 11.8 L29.2 8 L27.2 8 C27.2 5.4 28 3.2 29.5 1.2 Z" fill="#9aa2a2" stroke="#5a5656" stroke-width=".8" stroke-linejoin="round"/><path d="M29.6 12.6 C33.4 12 35.4 9.6 35.6 6 L38 6 L34.2 2.2 L30.6 6 L32.6 6 C32.4 8.8 31.4 11 29.6 12.6 Z" fill="#9aa2a2" stroke="#5a5656" stroke-width=".8" stroke-linejoin="round"/></svg>
<div class="nc" style="left:1020.53px;width:100.17px">N/A</div>
<svg style="left:1077.5px;top:1014px" width="40" height="15" viewBox="0 0 40 15"><rect x="1.4" y="3.9" width="13.2" height="9.3" rx="2" fill="#fff" stroke="#2a1a1a" stroke-width="1.7"/><path d="M4.1 7.9h8" stroke="#000" stroke-width="1.7" fill="none"/><path d="M5.4 10.6h6.7" stroke="#4a1212" stroke-width="1.6" fill="none"/><path d="M3.4 10.6h1.4" stroke="#a05050" stroke-width="1.4" fill="none"/><path d="M29.5 1.2 C26 1.8 24 4.4 24 8 L22 8 L25.6 11.8 L29.2 8 L27.2 8 C27.2 5.4 28 3.2 29.5 1.2 Z" fill="#9aa2a2" stroke="#5a5656" stroke-width=".8" stroke-linejoin="round"/><path d="M29.6 12.6 C33.4 12 35.4 9.6 35.6 6 L38 6 L34.2 2.2 L30.6 6 L32.6 6 C32.4 8.8 31.4 11 29.6 12.6 Z" fill="#9aa2a2" stroke="#5a5656" stroke-width=".8" stroke-linejoin="round"/></svg>
<div class="nc" style="left:1120.70px;width:100.17px">N/A</div>
<svg style="left:1177.7px;top:1014px" width="40" height="15" viewBox="0 0 40 15"><rect x="1.4" y="3.9" width="13.2" height="9.3" rx="2" fill="#fff" stroke="#2a1a1a" stroke-width="1.7"/><path d="M4.1 7.9h8" stroke="#000" stroke-width="1.7" fill="none"/><path d="M5.4 10.6h6.7" stroke="#4a1212" stroke-width="1.6" fill="none"/><path d="M3.4 10.6h1.4" stroke="#a05050" stroke-width="1.4" fill="none"/><path d="M29.5 1.2 C26 1.8 24 4.4 24 8 L22 8 L25.6 11.8 L29.2 8 L27.2 8 C27.2 5.4 28 3.2 29.5 1.2 Z" fill="#9aa2a2" stroke="#5a5656" stroke-width=".8" stroke-linejoin="round"/><path d="M29.6 12.6 C33.4 12 35.4 9.6 35.6 6 L38 6 L34.2 2.2 L30.6 6 L32.6 6 C32.4 8.8 31.4 11 29.6 12.6 Z" fill="#9aa2a2" stroke="#5a5656" stroke-width=".8" stroke-linejoin="round"/></svg>
<div class="nc" style="left:1220.87px;width:100.17px">N/A</div>
<svg style="left:1277.9px;top:1014px" width="40" height="15" viewBox="0 0 40 15"><rect x="1.4" y="3.9" width="13.2" height="9.3" rx="2" fill="#fff" stroke="#2a1a1a" stroke-width="1.7"/><path d="M4.1 7.9h8" stroke="#000" stroke-width="1.7" fill="none"/><path d="M5.4 10.6h6.7" stroke="#4a1212" stroke-width="1.6" fill="none"/><path d="M3.4 10.6h1.4" stroke="#a05050" stroke-width="1.4" fill="none"/><path d="M29.5 1.2 C26 1.8 24 4.4 24 8 L22 8 L25.6 11.8 L29.2 8 L27.2 8 C27.2 5.4 28 3.2 29.5 1.2 Z" fill="#9aa2a2" stroke="#5a5656" stroke-width=".8" stroke-linejoin="round"/><path d="M29.6 12.6 C33.4 12 35.4 9.6 35.6 6 L38 6 L34.2 2.2 L30.6 6 L32.6 6 C32.4 8.8 31.4 11 29.6 12.6 Z" fill="#9aa2a2" stroke="#5a5656" stroke-width=".8" stroke-linejoin="round"/></svg>
<div class="nc" style="left:1321.04px;width:100.17px">N/A</div>
<svg style="left:1378.0px;top:1014px" width="40" height="15" viewBox="0 0 40 15"><rect x="1.4" y="3.9" width="13.2" height="9.3" rx="2" fill="#fff" stroke="#2a1a1a" stroke-width="1.7"/><path d="M4.1 7.9h8" stroke="#000" stroke-width="1.7" fill="none"/><path d="M5.4 10.6h6.7" stroke="#4a1212" stroke-width="1.6" fill="none"/><path d="M3.4 10.6h1.4" stroke="#a05050" stroke-width="1.4" fill="none"/><path d="M29.5 1.2 C26 1.8 24 4.4 24 8 L22 8 L25.6 11.8 L29.2 8 L27.2 8 C27.2 5.4 28 3.2 29.5 1.2 Z" fill="#9aa2a2" stroke="#5a5656" stroke-width=".8" stroke-linejoin="round"/><path d="M29.6 12.6 C33.4 12 35.4 9.6 35.6 6 L38 6 L34.2 2.2 L30.6 6 L32.6 6 C32.4 8.8 31.4 11 29.6 12.6 Z" fill="#9aa2a2" stroke="#5a5656" stroke-width=".8" stroke-linejoin="round"/></svg>
<div class="nc" style="left:1421.21px;width:100.17px">N/A</div>
<svg style="left:1478.2px;top:1014px" width="40" height="15" viewBox="0 0 40 15"><rect x="1.4" y="3.9" width="13.2" height="9.3" rx="2" fill="#fff" stroke="#2a1a1a" stroke-width="1.7"/><path d="M4.1 7.9h8" stroke="#000" stroke-width="1.7" fill="none"/><path d="M5.4 10.6h6.7" stroke="#4a1212" stroke-width="1.6" fill="none"/><path d="M3.4 10.6h1.4" stroke="#a05050" stroke-width="1.4" fill="none"/><path d="M29.5 1.2 C26 1.8 24 4.4 24 8 L22 8 L25.6 11.8 L29.2 8 L27.2 8 C27.2 5.4 28 3.2 29.5 1.2 Z" fill="#9aa2a2" stroke="#5a5656" stroke-width=".8" stroke-linejoin="round"/><path d="M29.6 12.6 C33.4 12 35.4 9.6 35.6 6 L38 6 L34.2 2.2 L30.6 6 L32.6 6 C32.4 8.8 31.4 11 29.6 12.6 Z" fill="#9aa2a2" stroke="#5a5656" stroke-width=".8" stroke-linejoin="round"/></svg>
<div class="nc" style="left:1521.38px;width:100.17px">N/A</div>
<svg style="left:1578.4px;top:1014px" width="40" height="15" viewBox="0 0 40 15"><rect x="1.4" y="3.9" width="13.2" height="9.3" rx="2" fill="#fff" stroke="#2a1a1a" stroke-width="1.7"/><path d="M4.1 7.9h8" stroke="#000" stroke-width="1.7" fill="none"/><path d="M5.4 10.6h6.7" stroke="#4a1212" stroke-width="1.6" fill="none"/><path d="M3.4 10.6h1.4" stroke="#a05050" stroke-width="1.4" fill="none"/><path d="M29.5 1.2 C26 1.8 24 4.4 24 8 L22 8 L25.6 11.8 L29.2 8 L27.2 8 C27.2 5.4 28 3.2 29.5 1.2 Z" fill="#9aa2a2" stroke="#5a5656" stroke-width=".8" stroke-linejoin="round"/><path d="M29.6 12.6 C33.4 12 35.4 9.6 35.6 6 L38 6 L34.2 2.2 L30.6 6 L32.6 6 C32.4 8.8 31.4 11 29.6 12.6 Z" fill="#9aa2a2" stroke="#5a5656" stroke-width=".8" stroke-linejoin="round"/></svg>
<div class="nc" style="left:1621.55px;width:27.47px">N/A</div>
<div class="abs" style="left:51px;top:1037px;width:1598px;height:1px;background:#d8d4ce"></div>
<div class="phead" style="left:1656px;top:912.2px;height:19.6px;width:255.5px">Layer stack [1 (default/default)]</div>
<svg style="left:1884px;top:916px" width="26" height="12" viewBox="0 0 26 12"><rect x="0" y="0.3" width="10.8" height="11.2" fill="#7f669c" opacity=".92"/><path d="M0.5 1 L2.6 3 M10.3 1 L8.2 3 M0.5 11 L2.6 9 M10.3 11 L8.2 9" stroke="#b4a6c6" stroke-width="1.3" fill="none"/><rect x="3" y="2.4" width="2.2" height="2" fill="#a070dc"/><rect x="3.4" y="6" width="2.6" height="2.4" fill="#a070dc"/><rect x="6.4" y="8" width="2" height="1.8" fill="#b088dc"/><rect x="6.2" y="3.6" width="1.8" height="1.8" fill="#b090d4"/><rect x="6.4" y="5.6" width="2" height="2" fill="#6a5a76"/><rect x="14" y="0.3" width="10.8" height="11.2" fill="#7f669c" opacity=".92"/><path d="M14.5 1 L16.6 3 M24.3 1 L22.2 3 M14.5 11 L16.6 9 M24.3 11 L22.2 9" stroke="#b4a6c6" stroke-width="1.3" fill="none"/><rect x="18.4" y="2" width="2" height="2" fill="#a070dc"/><rect x="18.4" y="8" width="2" height="2" fill="#a070dc"/><rect x="15.6" y="5" width="1.6" height="1.6" fill="#9a72c8"/><rect x="21.8" y="5" width="1.6" height="1.6" fill="#9a72c8"/><path d="M18 4.6 L21 7.4 M21 4.6 L18 7.4" stroke="#666a4c" stroke-width="1.6" fill="none"/></svg>
<div class="abs" style="left:1656px;top:932px;width:255.5px;height:70px;background:#fff;border:1px solid #cfc8d8;border-top:2px solid #b9a3cf"></div>
<div class="abs" style="left:1657.5px;top:933.5px;width:253px;height:28px;background:#cc8fd1"></div>
<div class="abs" style="left:1691.5px;top:933.5px;width:1.5px;height:28px;background:#b98cc0"></div><div class="abs" style="left:1833.5px;top:933.5px;width:1.5px;height:28px;background:#b98cc0"></div>
<svg style="left:1661px;top:939px" width="18" height="14" viewBox="0 0 18 14"><path d="M0.5 6.8 C4 1.2 13.5 1.2 17.5 6.8 C13.5 12 4 12 0.5 6.8 Z" fill="#fff"/><circle cx="9" cy="6.6" r="3.6" fill="#555"/></svg>
<div class="abs" style="left:1696px;top:939px;font-size:12px;line-height:16px;white-space:pre">All events</div>
<div class="abs" style="left:1838px;top:939px;font-size:12px;line-height:16px;white-space:pre">30,464,308</div>
<div class="abs" style="left:1656px;top:1001px;width:255.5px;height:7px;background:#9966cc"></div>
<div class="abs" style="left:1657px;top:1008px;width:254px;height:31px;background:linear-gradient(#4a4a4a,#1e1e1e);border-radius:0 0 4px 4px"></div>
<svg style="left:1657px;top:1008px" width="254" height="31" viewBox="0 0 254 31"><path d="M8.5 8.5H17L21.5 13V24.5H8.5Z M17 8.5V13H21.5" fill="none" stroke="#fff" stroke-width="1.5"/><path d="M48.5 24V8 M42 14.5 L48.5 8 L55 14.5" fill="none" stroke="#fff" stroke-width="1.6"/><path d="M80.500 7V23 M74 16.5 L80.5 23 L87 16.5" fill="none" stroke="#fff" stroke-width="1.6"/><rect x="106" y="8" width="14" height="10" fill="#444" stroke="#ddd" stroke-width="1.4"/><rect x="110" y="12" width="14" height="10" fill="#333" stroke="#fff" stroke-width="1.4"/><rect x="110" y="12" width="14" height="3" fill="#fff"/><path d="M143 10.5 L153 20.5 M153 10.5 L143 20.5" stroke="#fff" stroke-width="2.6"/></svg>
<div class="abs" style="left:561px;top:500px;width:1px;height:24px;background:repeating-linear-gradient(180deg,#bbb 0,#bbb 1px,transparent 1px,transparent 3px)"></div>
<div class="abs" style="left:1652px;top:957px;width:1px;height:24px;background:repeating-linear-gradient(180deg,#bbb 0,#bbb 1px,transparent 1px,transparent 3px)"></div>
<div class="abs" style="left:972px;top:909px;width:18px;height:1px;background:repeating-linear-gradient(90deg,#bbb 0,#bbb 1px,transparent 1px,transparent 3px)"></div>
<div class="abs" style="left:0;top:1051.5px;width:1920px;height:8px;background:linear-gradient(90deg,#536568 0,#55676a 75px,#7f9db6 118px,#8fb0ce 640px,#93b3d0 1040px,#a9c6e0 1400px,#8db0cc 1620px,#5f7f7c 1780px,#6d8d98 1900px,#9ab 1920px)"></div>
<div class="abs" style="left:0;top:1051px;width:1920px;height:1px;background:#2c3132"></div>
<div class="abs" style="left:76px;top:1053px;width:34px;height:7px;background:#c9d3d3;border:1px solid #5a7388;border-bottom:0;border-radius:2px 2px 0 0"></div>
<div class="abs" style="left:213px;top:1053px;width:43px;height:7px;background:#cfdbe6;border:1px solid #5a7388;border-bottom:0;border-radius:2px 2px 0 0"></div>
<div class="abs" style="left:352px;top:1053px;width:43px;height:7px;background:#cfdbe6;border:1px solid #5a7388;border-bottom:0;border-radius:2px 2px 0 0"></div>
<div class="abs" style="left:445px;top:1053px;width:33px;height:7px;background:#d3dde8;border:1px solid #5a7388;border-bottom:0;border-radius:2px 2px 0 0"></div>
<div class="abs" style="left:490px;top:1053px;width:40px;height:7px;background:#d3dde8;border:1px solid #5a7388;border-bottom:0;border-radius:2px 2px 0 0"></div>
<div class="abs" style="left:537px;top:1053px;width:36px;height:7px;background:#d3dde8;border:1px solid #5a7388;border-bottom:0;border-radius:2px 2px 0 0"></div>
<div class="abs" style="left:583px;top:1053px;width:42px;height:7px;background:#d3dde8;border:1px solid #5a7388;border-bottom:0;border-radius:2px 2px 0 0"></div>
<div class="abs" style="left:629px;top:1053px;width:43px;height:7px;background:#cfdbe6;border:1px solid #5a7388;border-bottom:0;border-radius:2px 2px 0 0"></div>
<div class="abs" style="left:675px;top:1053px;width:35px;height:7px;background:#d6e0ea;border:1px solid #5a7388;border-bottom:0;border-radius:2px 2px 0 0"></div>
<div class="abs" style="left:722px;top:1053px;width:41px;height:7px;background:#d6e0ea;border:1px solid #5a7388;border-bottom:0;border-radius:2px 2px 0 0"></div>
<div class="abs" style="left:768px;top:1053px;width:40px;height:7px;background:#d6e0ea;border:1px solid #5a7388;border-bottom:0;border-radius:2px 2px 0 0"></div>
<div class="abs" style="left:814px;top:1053px;width:41px;height:7px;background:#d6e0ea;border:1px solid #5a7388;border-bottom:0;border-radius:2px 2px 0 0"></div>
<div class="abs" style="left:860px;top:1053px;width:33px;height:7px;background:#dfe3ec;border:1px solid #5a7388;border-bottom:0;border-radius:2px 2px 0 0"></div>
<div class="abs" style="left:905px;top:1053px;width:30px;height:7px;background:#a8e0b0;border:1px solid #5a7388;border-bottom:0;border-radius:2px 2px 0 0"></div>
<div class="abs" style="left:952px;top:1053px;width:41px;height:7px;background:#d6e0ea;border:1px solid #5a7388;border-bottom:0;border-radius:2px 2px 0 0"></div>
<div class="abs" style="left:998px;top:1053px;width:37px;height:7px;background:#e2e6f0;border:1px solid #5a7388;border-bottom:0;border-radius:2px 2px 0 0"></div>
<div class="abs" style="left:10px;top:1046px;width:34px;height:34px;border-radius:17px;background:radial-gradient(circle at 50% 40%,#dff0fa 0,#9cc8e6 45%,#3f7fb0 75%,#1d4f78 100%);border:1px solid #1c4a70"></div>
<div class="abs" style="left:20px;top:1055px;width:7px;height:6px;background:#e8582a;border-radius:2px 0 0 0"></div><div class="abs" style="left:28px;top:1056px;width:7px;height:5px;background:#7cc043"></div>
<div class="abs" style="left:1886px;top:1053px;width:1px;height:7px;background:#3c4c50"></div><div class="abs" style="left:1887px;top:1053px;width:33px;height:7px;background:#8aa0ad"></div>
<div class="abs" style="left:0;top:1059.5px;width:1920px;height:3px;background:#fff"></div>
</body></html>
